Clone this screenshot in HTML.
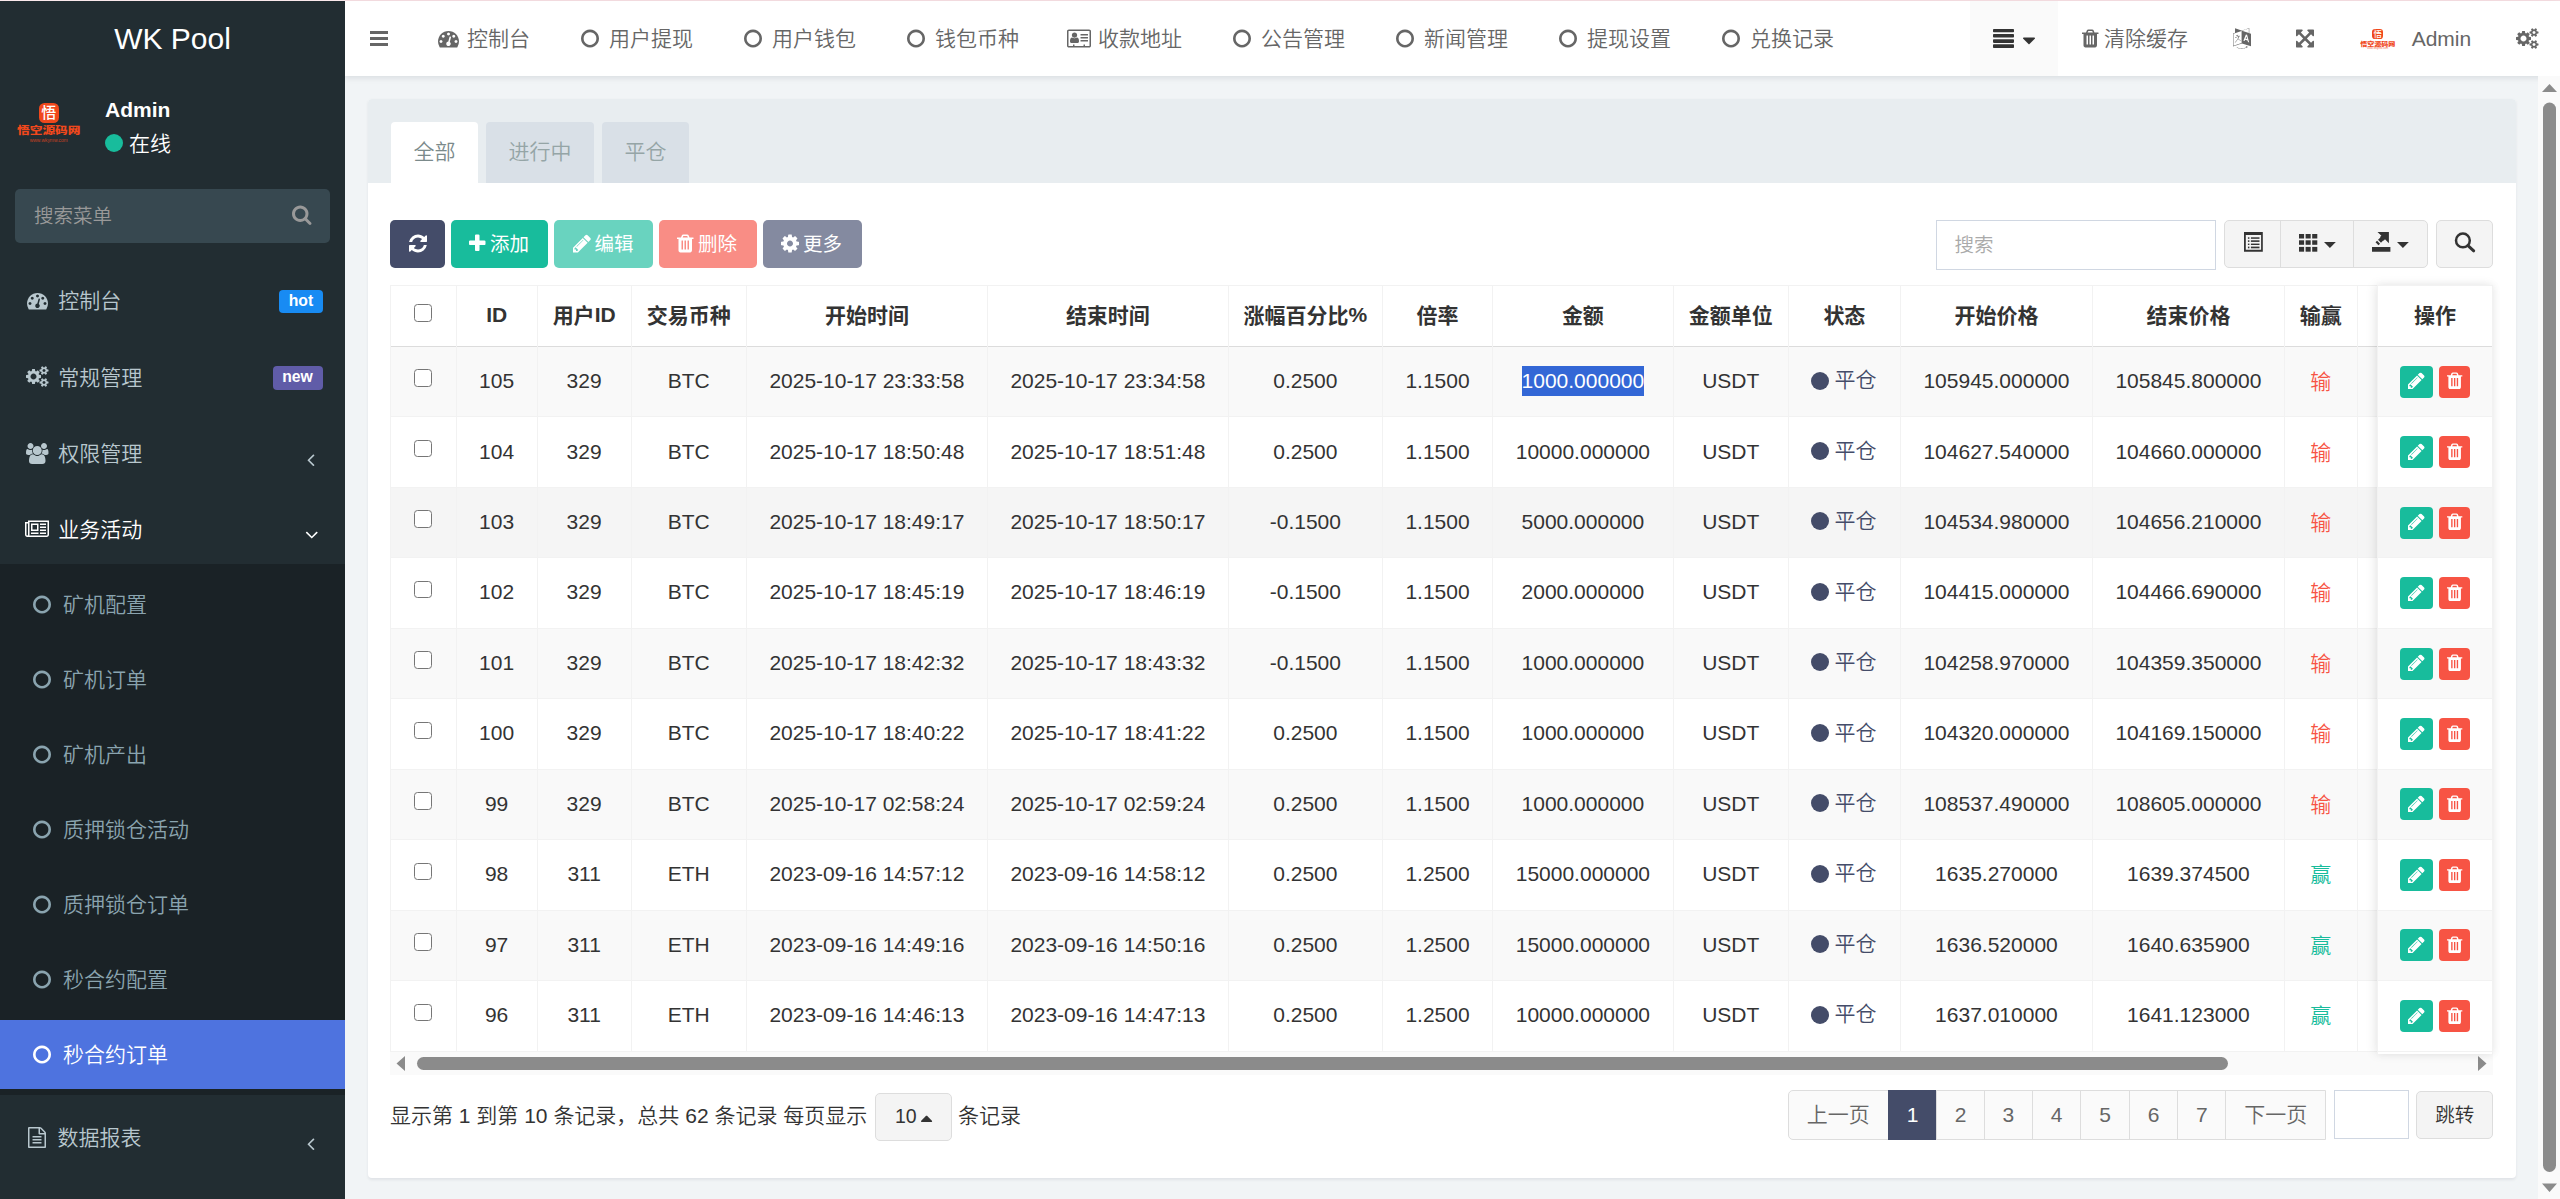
<!DOCTYPE html>
<html lang="zh-CN"><head><meta charset="utf-8"><title>WK Pool</title>
<style>
html,body{margin:0;padding:0}
body{width:2560px;height:1199px;overflow:hidden;position:relative;background:#f1f4f6;font-family:"Liberation Sans","Noto Sans CJK SC",sans-serif;font-size:21px;color:#333;font-weight:350}
.b{position:absolute;box-sizing:border-box}
.t{position:absolute;white-space:nowrap}
.i{position:absolute;overflow:visible}
</style></head><body>

<div class="b" style="left:0.00px;top:0.00px;width:2560.00px;height:1.00px;background:#f7dfe3;"></div>
<div class="b" style="left:0.00px;top:0.00px;width:345.00px;height:1.00px;background:#fbe9ec;"></div>
<div class="b" style="left:345.00px;top:1.00px;width:2215.00px;height:75.00px;background:#fff;box-shadow:0 1.5px 6px rgba(0,21,41,.10);"></div>
<div class="b" style="left:370.00px;top:30.75px;width:18.00px;height:3.00px;background:#666;"></div>
<div class="b" style="left:370.00px;top:36.75px;width:18.00px;height:3.00px;background:#666;"></div>
<div class="b" style="left:370.00px;top:42.75px;width:18.00px;height:3.00px;background:#666;"></div>
<svg class="i" style="left:438.00px;top:27.50px;width:21.00px;height:21px;" viewBox="0 -1536 1792 1792"><path fill="#666" transform="scale(1,-1)" d="M384 384q0 53 -37.5 90.5t-90.5 37.5t-90.5 -37.5t-37.5 -90.5t37.5 -90.5t90.5 -37.5t90.5 37.5t37.5 90.5zM576 832q0 53 -37.5 90.5t-90.5 37.5t-90.5 -37.5t-37.5 -90.5t37.5 -90.5t90.5 -37.5t90.5 37.5t37.5 90.5zM1004 351l101 382q6 26 -7.5 48.5t-38.5 29.5 t-48 -6.5t-30 -39.5l-101 -382q-60 -5 -107 -43.5t-63 -98.5q-20 -77 20 -146t117 -89t146 20t89 117q16 60 -6 117t-72 91zM1664 384q0 53 -37.5 90.5t-90.5 37.5t-90.5 -37.5t-37.5 -90.5t37.5 -90.5t90.5 -37.5t90.5 37.5t37.5 90.5zM1024 1024q0 53 -37.5 90.5 t-90.5 37.5t-90.5 -37.5t-37.5 -90.5t37.5 -90.5t90.5 -37.5t90.5 37.5t37.5 90.5zM1472 832q0 53 -37.5 90.5t-90.5 37.5t-90.5 -37.5t-37.5 -90.5t37.5 -90.5t90.5 -37.5t90.5 37.5t37.5 90.5zM1792 384q0 -261 -141 -483q-19 -29 -54 -29h-1402q-35 0 -54 29 q-141 221 -141 483q0 182 71 348t191 286t286 191t348 71t348 -71t286 -191t191 -286t71 -348z"/></svg>
<div class="t" style="top:18.50px;height:40px;line-height:40px;font-size:21px;color:#666;left:467.00px;">控制台</div>
<svg class="i" style="left:581.00px;top:27.50px;width:18.00px;height:21px;" viewBox="0 -1536 1536 1792"><path fill="#666" transform="scale(1,-1)" d="M768 1184q-148 0 -273 -73t-198 -198t-73 -273t73 -273t198 -198t273 -73t273 73t198 198t73 273t-73 273t-198 198t-273 73zM1536 640q0 -209 -103 -385.5t-279.5 -279.5t-385.5 -103t-385.5 103t-279.5 279.5t-103 385.5t103 385.5t279.5 279.5t385.5 103t385.5 -103 t279.5 -279.5t103 -385.5z"/></svg>
<div class="t" style="top:18.50px;height:40px;line-height:40px;font-size:21px;color:#666;left:609.00px;">用户提现</div>
<svg class="i" style="left:744.00px;top:27.50px;width:18.00px;height:21px;" viewBox="0 -1536 1536 1792"><path fill="#666" transform="scale(1,-1)" d="M768 1184q-148 0 -273 -73t-198 -198t-73 -273t73 -273t198 -198t273 -73t273 73t198 198t73 273t-73 273t-198 198t-273 73zM1536 640q0 -209 -103 -385.5t-279.5 -279.5t-385.5 -103t-385.5 103t-279.5 279.5t-103 385.5t103 385.5t279.5 279.5t385.5 103t385.5 -103 t279.5 -279.5t103 -385.5z"/></svg>
<div class="t" style="top:18.50px;height:40px;line-height:40px;font-size:21px;color:#666;left:772.00px;">用户钱包</div>
<svg class="i" style="left:907.00px;top:27.50px;width:18.00px;height:21px;" viewBox="0 -1536 1536 1792"><path fill="#666" transform="scale(1,-1)" d="M768 1184q-148 0 -273 -73t-198 -198t-73 -273t73 -273t198 -198t273 -73t273 73t198 198t73 273t-73 273t-198 198t-273 73zM1536 640q0 -209 -103 -385.5t-279.5 -279.5t-385.5 -103t-385.5 103t-279.5 279.5t-103 385.5t103 385.5t279.5 279.5t385.5 103t385.5 -103 t279.5 -279.5t103 -385.5z"/></svg>
<div class="t" style="top:18.50px;height:40px;line-height:40px;font-size:21px;color:#666;left:935.00px;">钱包币种</div>
<svg class="i" style="left:1067.00px;top:27.50px;width:24.00px;height:21px;" viewBox="0 -1536 2048 1792"><path fill="#666" transform="scale(1,-1)" d="M1024 405q0 -64 -37 -106.5t-91 -42.5h-512q-54 0 -91 42.5t-37 106.5t9 117.5t29.5 103t60.5 78t97 28.5q6 -4 30 -18t37.5 -21.5t35.5 -17.5t43 -14.5t42 -4.5t42 4.5t43 14.5t35.5 17.5t37.5 21.5t30 18q57 0 97 -28.5t60.5 -78t29.5 -103t9 -117.5zM867 925 q0 -94 -66.5 -160.5t-160.5 -66.5t-160.5 66.5t-66.5 160.5t66.5 160.5t160.5 66.5t160.5 -66.5t66.5 -160.5zM1792 480v-64q0 -14 -9 -23t-23 -9h-576q-14 0 -23 9t-9 23v64q0 14 9 23t23 9h576q14 0 23 -9t9 -23zM1792 732v-56q0 -15 -10.5 -25.5t-25.5 -10.5h-568 q-15 0 -25.5 10.5t-10.5 25.5v56q0 15 10.5 25.5t25.5 10.5h568q15 0 25.5 -10.5t10.5 -25.5zM1792 992v-64q0 -14 -9 -23t-23 -9h-576q-14 0 -23 9t-9 23v64q0 14 9 23t23 9h576q14 0 23 -9t9 -23zM1920 32v1216q0 13 -9.5 22.5t-22.5 9.5h-1728q-13 0 -22.5 -9.5 t-9.5 -22.5v-1216q0 -13 9.5 -22.5t22.5 -9.5h352v96q0 14 9 23t23 9h64q14 0 23 -9t9 -23v-96h768v96q0 14 9 23t23 9h64q14 0 23 -9t9 -23v-96h352q13 0 22.5 9.5t9.5 22.5zM2048 1248v-1216q0 -66 -47 -113t-113 -47h-1728q-66 0 -113 47t-47 113v1216q0 66 47 113 t113 47h1728q66 0 113 -47t47 -113z"/></svg>
<div class="t" style="top:18.50px;height:40px;line-height:40px;font-size:21px;color:#666;left:1098.00px;">收款地址</div>
<svg class="i" style="left:1233.00px;top:27.50px;width:18.00px;height:21px;" viewBox="0 -1536 1536 1792"><path fill="#666" transform="scale(1,-1)" d="M768 1184q-148 0 -273 -73t-198 -198t-73 -273t73 -273t198 -198t273 -73t273 73t198 198t73 273t-73 273t-198 198t-273 73zM1536 640q0 -209 -103 -385.5t-279.5 -279.5t-385.5 -103t-385.5 103t-279.5 279.5t-103 385.5t103 385.5t279.5 279.5t385.5 103t385.5 -103 t279.5 -279.5t103 -385.5z"/></svg>
<div class="t" style="top:18.50px;height:40px;line-height:40px;font-size:21px;color:#666;left:1261.00px;">公告管理</div>
<svg class="i" style="left:1396.00px;top:27.50px;width:18.00px;height:21px;" viewBox="0 -1536 1536 1792"><path fill="#666" transform="scale(1,-1)" d="M768 1184q-148 0 -273 -73t-198 -198t-73 -273t73 -273t198 -198t273 -73t273 73t198 198t73 273t-73 273t-198 198t-273 73zM1536 640q0 -209 -103 -385.5t-279.5 -279.5t-385.5 -103t-385.5 103t-279.5 279.5t-103 385.5t103 385.5t279.5 279.5t385.5 103t385.5 -103 t279.5 -279.5t103 -385.5z"/></svg>
<div class="t" style="top:18.50px;height:40px;line-height:40px;font-size:21px;color:#666;left:1424.00px;">新闻管理</div>
<svg class="i" style="left:1559.00px;top:27.50px;width:18.00px;height:21px;" viewBox="0 -1536 1536 1792"><path fill="#666" transform="scale(1,-1)" d="M768 1184q-148 0 -273 -73t-198 -198t-73 -273t73 -273t198 -198t273 -73t273 73t198 198t73 273t-73 273t-198 198t-273 73zM1536 640q0 -209 -103 -385.5t-279.5 -279.5t-385.5 -103t-385.5 103t-279.5 279.5t-103 385.5t103 385.5t279.5 279.5t385.5 103t385.5 -103 t279.5 -279.5t103 -385.5z"/></svg>
<div class="t" style="top:18.50px;height:40px;line-height:40px;font-size:21px;color:#666;left:1587.00px;">提现设置</div>
<svg class="i" style="left:1722.00px;top:27.50px;width:18.00px;height:21px;" viewBox="0 -1536 1536 1792"><path fill="#666" transform="scale(1,-1)" d="M768 1184q-148 0 -273 -73t-198 -198t-73 -273t73 -273t198 -198t273 -73t273 73t198 198t73 273t-73 273t-198 198t-273 73zM1536 640q0 -209 -103 -385.5t-279.5 -279.5t-385.5 -103t-385.5 103t-279.5 279.5t-103 385.5t103 385.5t279.5 279.5t385.5 103t385.5 -103 t279.5 -279.5t103 -385.5z"/></svg>
<div class="t" style="top:18.50px;height:40px;line-height:40px;font-size:21px;color:#666;left:1750.00px;">兑换记录</div>
<div class="b" style="left:1970.00px;top:1.00px;width:88.00px;height:75.00px;background:#fafafa;"></div>
<svg class="i" style="left:1993px;top:28px;width:21px;height:21px" viewBox="0 0 21 21"><g fill="#333"><rect x="0" y="0.9" width="21" height="3.3" rx=".8"/><rect x="0" y="6.1" width="21" height="3.5" rx=".8"/><rect x="0" y="11.2" width="21" height="3.7" rx=".8"/><rect x="0" y="16.3" width="21" height="3.7" rx=".8"/></g></svg>
<svg class="i" style="left:2023.00px;top:29.70px;width:12.00px;height:21px;" viewBox="0 -1536 1024 1792"><path fill="#333" transform="scale(1,-1)" d="M1024 832q0 -26 -19 -45l-448 -448q-19 -19 -45 -19t-45 19l-448 448q-19 19 -19 45t19 45t45 19h896q26 0 45 -19t19 -45z"/></svg>
<svg class="i" style="left:2082.00px;top:27.50px;width:16.50px;height:21px;" viewBox="0 -1536 1408 1792"><path fill="#666" transform="scale(1,-1)" d="M512 160v704q0 14 -9 23t-23 9h-64q-14 0 -23 -9t-9 -23v-704q0 -14 9 -23t23 -9h64q14 0 23 9t9 23zM768 160v704q0 14 -9 23t-23 9h-64q-14 0 -23 -9t-9 -23v-704q0 -14 9 -23t23 -9h64q14 0 23 9t9 23zM1024 160v704q0 14 -9 23t-23 9h-64q-14 0 -23 -9t-9 -23v-704 q0 -14 9 -23t23 -9h64q14 0 23 9t9 23zM480 1152h448l-48 117q-7 9 -17 11h-317q-10 -2 -17 -11zM1408 1120v-64q0 -14 -9 -23t-23 -9h-96v-948q0 -83 -47 -143.5t-113 -60.5h-832q-66 0 -113 58.5t-47 141.5v952h-96q-14 0 -23 9t-9 23v64q0 14 9 23t23 9h309l70 167 q15 37 54 63t79 26h320q40 0 79 -26t54 -63l70 -167h309q14 0 23 -9t9 -23z"/></svg>
<div class="t" style="top:18.50px;height:40px;line-height:40px;font-size:21px;color:#666;left:2104.00px;">清除缓存</div>
<svg class="i" style="left:2233.00px;top:27.50px;width:18.00px;height:21px;" viewBox="0 -1536 1536 1792"><path fill="#666" transform="scale(1,-1)" d="M654 458q-1 -3 -12.5 0.5t-31.5 11.5l-20 9q-44 20 -87 49q-7 5 -41 31.5t-38 28.5q-67 -103 -134 -181q-81 -95 -105 -110q-4 -2 -19.5 -4t-18.5 0q6 4 82 92q21 24 85.5 115t78.5 118q17 30 51 98.5t36 77.5q-8 1 -110 -33q-8 -2 -27.5 -7.5t-34.5 -9.5t-17 -5 q-2 -2 -2 -10.5t-1 -9.5q-5 -10 -31 -15q-23 -7 -47 0q-18 4 -28 21q-4 6 -5 23q6 2 24.5 5t29.5 6q58 16 105 32q100 35 102 35q10 2 43 19.5t44 21.5q9 3 21.5 8t14.5 5.5t6 -0.5q2 -12 -1 -33q0 -2 -12.5 -27t-26.5 -53.5t-17 -33.5q-25 -50 -77 -131l64 -28 q12 -6 74.5 -32t67.5 -28q4 -1 10.5 -25.5t4.5 -30.5zM449 944q3 -15 -4 -28q-12 -23 -50 -38q-30 -12 -60 -12q-26 3 -49 26q-14 15 -18 41l1 3q3 -3 19.5 -5t26.5 0t58 16q36 12 55 14q17 0 21 -17zM1147 815l63 -227l-139 42zM39 15l694 232v1032l-694 -233v-1031z M1280 332l102 -31l-181 657l-100 31l-216 -536l102 -31l45 110l211 -65zM777 1294l573 -184v380zM1088 -29l158 -13l-54 -160l-40 66q-130 -83 -276 -108q-58 -12 -91 -12h-84q-79 0 -199.5 39t-183.5 85q-8 7 -8 16q0 8 5 13.5t13 5.5q4 0 18 -7.5t30.5 -16.5t20.5 -11 q73 -37 159.5 -61.5t157.5 -24.5q95 0 167 14.5t157 50.5q15 7 30.5 15.5t34 19t28.5 16.5zM1536 1050v-1079l-774 246q-14 -6 -375 -127.5t-368 -121.5q-13 0 -18 13q0 1 -1 3v1078q3 9 4 10q5 6 20 11q107 36 149 50v384l558 -198q2 0 160.5 55t316 108.5t161.5 53.5 q20 0 20 -21v-418z"/></svg>
<svg class="i" style="left:2296.00px;top:27.50px;width:18.00px;height:21px;" viewBox="0 -1536 1536 1792"><path fill="#666" transform="scale(1,-1)" d="M1283 995l-355 -355l355 -355l144 144q29 31 70 14q39 -17 39 -59v-448q0 -26 -19 -45t-45 -19h-448q-42 0 -59 40q-17 39 14 69l144 144l-355 355l-355 -355l144 -144q31 -30 14 -69q-17 -40 -59 -40h-448q-26 0 -45 19t-19 45v448q0 42 40 59q39 17 69 -14l144 -144 l355 355l-355 355l-144 -144q-19 -19 -45 -19q-12 0 -24 5q-40 17 -40 59v448q0 26 19 45t45 19h448q42 0 59 -40q17 -39 -14 -69l-144 -144l355 -355l355 355l-144 144q-31 30 -14 69q17 40 59 40h448q26 0 45 -19t19 -45v-448q0 -42 -39 -59q-13 -5 -25 -5q-26 0 -45 19z "/></svg>
<div class="b" style="left:2372.06px;top:28.67px;width:11.39px;height:10.83px;background:#f0481c;border-radius:3.1px;"></div><div class="t" style="left:2372.06px;top:28.67px;width:11.39px;height:10.83px;line-height:10.83px;font-size:8.33px;color:#fff;text-align:center;font-weight:500">悟</div><div class="t" style="left:2359.00px;top:40.33px;width:37.50px;height:7.78px;line-height:7.78px;font-size:7.06px;color:#f0481c;text-align:center;font-weight:900;transform:scaleY(.78)">悟空源码网</div><div class="t" style="left:2359.00px;top:48.00px;width:37.50px;height:2.78px;line-height:2.78px;font-size:2.72px;color:#f0481c;opacity:.75;text-align:center;">www.wkymw.com</div>
<div class="t" style="top:18.50px;height:40px;line-height:40px;font-size:21px;color:#666;left:2411.70px;">Admin</div>
<svg class="i" style="left:2516.00px;top:27.50px;width:22.50px;height:21px;" viewBox="0 -1536 1920 1792"><path fill="#666" transform="scale(1,-1)" d="M896 640q0 106 -75 181t-181 75t-181 -75t-75 -181t75 -181t181 -75t181 75t75 181zM1664 128q0 52 -38 90t-90 38t-90 -38t-38 -90q0 -53 37.5 -90.5t90.5 -37.5t90.5 37.5t37.5 90.5zM1664 1152q0 52 -38 90t-90 38t-90 -38t-38 -90q0 -53 37.5 -90.5t90.5 -37.5 t90.5 37.5t37.5 90.5zM1280 731v-185q0 -10 -7 -19.5t-16 -10.5l-155 -24q-11 -35 -32 -76q34 -48 90 -115q7 -11 7 -20q0 -12 -7 -19q-23 -30 -82.5 -89.5t-78.5 -59.5q-11 0 -21 7l-115 90q-37 -19 -77 -31q-11 -108 -23 -155q-7 -24 -30 -24h-186q-11 0 -20 7.5t-10 17.5 l-23 153q-34 10 -75 31l-118 -89q-7 -7 -20 -7q-11 0 -21 8q-144 133 -144 160q0 9 7 19q10 14 41 53t47 61q-23 44 -35 82l-152 24q-10 1 -17 9.5t-7 19.5v185q0 10 7 19.5t16 10.5l155 24q11 35 32 76q-34 48 -90 115q-7 11 -7 20q0 12 7 20q22 30 82 89t79 59q11 0 21 -7 l115 -90q34 18 77 32q11 108 23 154q7 24 30 24h186q11 0 20 -7.5t10 -17.5l23 -153q34 -10 75 -31l118 89q8 7 20 7q11 0 21 -8q144 -133 144 -160q0 -8 -7 -19q-12 -16 -42 -54t-45 -60q23 -48 34 -82l152 -23q10 -2 17 -10.5t7 -19.5zM1920 198v-140q0 -16 -149 -31 q-12 -27 -30 -52q51 -113 51 -138q0 -4 -4 -7q-122 -71 -124 -71q-8 0 -46 47t-52 68q-20 -2 -30 -2t-30 2q-14 -21 -52 -68t-46 -47q-2 0 -124 71q-4 3 -4 7q0 25 51 138q-18 25 -30 52q-149 15 -149 31v140q0 16 149 31q13 29 30 52q-51 113 -51 138q0 4 4 7q4 2 35 20 t59 34t30 16q8 0 46 -46.5t52 -67.5q20 2 30 2t30 -2q51 71 92 112l6 2q4 0 124 -70q4 -3 4 -7q0 -25 -51 -138q17 -23 30 -52q149 -15 149 -31zM1920 1222v-140q0 -16 -149 -31q-12 -27 -30 -52q51 -113 51 -138q0 -4 -4 -7q-122 -71 -124 -71q-8 0 -46 47t-52 68 q-20 -2 -30 -2t-30 2q-14 -21 -52 -68t-46 -47q-2 0 -124 71q-4 3 -4 7q0 25 51 138q-18 25 -30 52q-149 15 -149 31v140q0 16 149 31q13 29 30 52q-51 113 -51 138q0 4 4 7q4 2 35 20t59 34t30 16q8 0 46 -46.5t52 -67.5q20 2 30 2t30 -2q51 71 92 112l6 2q4 0 124 -70 q4 -3 4 -7q0 -25 -51 -138q17 -23 30 -52q149 -15 149 -31z"/></svg>
<div class="b" style="left:0.00px;top:1.00px;width:345.00px;height:1198.00px;background:#222d32;"></div>
<div class="t" style="top:18.50px;height:40px;line-height:40px;font-size:30px;color:#fff;left:-327.50px;width:1000px;text-align:center;">WK Pool</div>
<div class="b" style="left:38.50px;top:103.00px;width:20.50px;height:19.50px;background:#f0481c;border-radius:5.5px;"></div><div class="t" style="left:38.50px;top:103.00px;width:20.50px;height:19.50px;line-height:19.50px;font-size:15.00px;color:#fff;text-align:center;font-weight:500">悟</div><div class="t" style="left:15.00px;top:124.00px;width:67.50px;height:14.00px;line-height:14.00px;font-size:12.70px;color:#f0481c;text-align:center;font-weight:900;transform:scaleY(.78)">悟空源码网</div><div class="t" style="left:15.00px;top:137.80px;width:67.50px;height:5.00px;line-height:5.00px;font-size:4.90px;color:#f0481c;opacity:.75;text-align:center;">www.wkymw.com</div>
<div class="t" style="top:90.00px;height:40px;line-height:40px;font-size:21px;color:#fff;font-weight:700;left:105.00px;">Admin</div>
<div class="b" style="left:105.00px;top:134.40px;width:18.00px;height:18.00px;background:#18bc9c;border-radius:50%;"></div>
<div class="t" style="top:123.50px;height:40px;line-height:40px;font-size:21px;color:#fff;left:129.00px;">在线</div>
<div class="b" style="left:15.00px;top:189.00px;width:315.00px;height:54.00px;background:#374850;border-radius:5px;"></div>
<div class="t" style="top:196.00px;height:40px;line-height:40px;font-size:19.5px;color:#999;left:34.00px;">搜索菜单</div>
<svg class="i" style="left:291.50px;top:204.00px;width:19.50px;height:21px;" viewBox="0 -1536 1664 1792"><path fill="#999" transform="scale(1,-1)" d="M1152 704q0 185 -131.5 316.5t-316.5 131.5t-316.5 -131.5t-131.5 -316.5t131.5 -316.5t316.5 -131.5t316.5 131.5t131.5 316.5zM1664 -128q0 -52 -38 -90t-90 -38q-54 0 -90 38l-343 342q-179 -124 -399 -124q-143 0 -273.5 55.5t-225 150t-150 225t-55.5 273.5 t55.5 273.5t150 225t225 150t273.5 55.5t273.5 -55.5t225 -150t150 -225t55.5 -273.5q0 -220 -124 -399l343 -343q37 -37 37 -90z"/></svg>
<svg class="i" style="left:26.50px;top:290.00px;width:21.00px;height:21px;" viewBox="0 -1536 1792 1792"><path fill="#b8c7ce" transform="scale(1,-1)" d="M384 384q0 53 -37.5 90.5t-90.5 37.5t-90.5 -37.5t-37.5 -90.5t37.5 -90.5t90.5 -37.5t90.5 37.5t37.5 90.5zM576 832q0 53 -37.5 90.5t-90.5 37.5t-90.5 -37.5t-37.5 -90.5t37.5 -90.5t90.5 -37.5t90.5 37.5t37.5 90.5zM1004 351l101 382q6 26 -7.5 48.5t-38.5 29.5 t-48 -6.5t-30 -39.5l-101 -382q-60 -5 -107 -43.5t-63 -98.5q-20 -77 20 -146t117 -89t146 20t89 117q16 60 -6 117t-72 91zM1664 384q0 53 -37.5 90.5t-90.5 37.5t-90.5 -37.5t-37.5 -90.5t37.5 -90.5t90.5 -37.5t90.5 37.5t37.5 90.5zM1024 1024q0 53 -37.5 90.5 t-90.5 37.5t-90.5 -37.5t-37.5 -90.5t37.5 -90.5t90.5 -37.5t90.5 37.5t37.5 90.5zM1472 832q0 53 -37.5 90.5t-90.5 37.5t-90.5 -37.5t-37.5 -90.5t37.5 -90.5t90.5 -37.5t90.5 37.5t37.5 90.5zM1792 384q0 -261 -141 -483q-19 -29 -54 -29h-1402q-35 0 -54 29 q-141 221 -141 483q0 182 71 348t191 286t286 191t348 71t348 -71t286 -191t191 -286t71 -348z"/></svg>
<div class="t" style="top:280.50px;height:40px;line-height:40px;font-size:21px;color:#b8c7ce;left:58.30px;">控制台</div>
<div class="b" style="left:279.00px;top:290.00px;width:44.00px;height:23.00px;background:#188bf3;border-radius:4px;"></div>
<div class="t" style="top:280.70px;height:40px;line-height:40px;font-size:15.75px;color:#fff;font-weight:700;left:-199.00px;width:1000px;text-align:center;">hot</div>
<svg class="i" style="left:25.75px;top:366.00px;width:22.50px;height:21px;" viewBox="0 -1536 1920 1792"><path fill="#b8c7ce" transform="scale(1,-1)" d="M896 640q0 106 -75 181t-181 75t-181 -75t-75 -181t75 -181t181 -75t181 75t75 181zM1664 128q0 52 -38 90t-90 38t-90 -38t-38 -90q0 -53 37.5 -90.5t90.5 -37.5t90.5 37.5t37.5 90.5zM1664 1152q0 52 -38 90t-90 38t-90 -38t-38 -90q0 -53 37.5 -90.5t90.5 -37.5 t90.5 37.5t37.5 90.5zM1280 731v-185q0 -10 -7 -19.5t-16 -10.5l-155 -24q-11 -35 -32 -76q34 -48 90 -115q7 -11 7 -20q0 -12 -7 -19q-23 -30 -82.5 -89.5t-78.5 -59.5q-11 0 -21 7l-115 90q-37 -19 -77 -31q-11 -108 -23 -155q-7 -24 -30 -24h-186q-11 0 -20 7.5t-10 17.5 l-23 153q-34 10 -75 31l-118 -89q-7 -7 -20 -7q-11 0 -21 8q-144 133 -144 160q0 9 7 19q10 14 41 53t47 61q-23 44 -35 82l-152 24q-10 1 -17 9.5t-7 19.5v185q0 10 7 19.5t16 10.5l155 24q11 35 32 76q-34 48 -90 115q-7 11 -7 20q0 12 7 20q22 30 82 89t79 59q11 0 21 -7 l115 -90q34 18 77 32q11 108 23 154q7 24 30 24h186q11 0 20 -7.5t10 -17.5l23 -153q34 -10 75 -31l118 89q8 7 20 7q11 0 21 -8q144 -133 144 -160q0 -8 -7 -19q-12 -16 -42 -54t-45 -60q23 -48 34 -82l152 -23q10 -2 17 -10.5t7 -19.5zM1920 198v-140q0 -16 -149 -31 q-12 -27 -30 -52q51 -113 51 -138q0 -4 -4 -7q-122 -71 -124 -71q-8 0 -46 47t-52 68q-20 -2 -30 -2t-30 2q-14 -21 -52 -68t-46 -47q-2 0 -124 71q-4 3 -4 7q0 25 51 138q-18 25 -30 52q-149 15 -149 31v140q0 16 149 31q13 29 30 52q-51 113 -51 138q0 4 4 7q4 2 35 20 t59 34t30 16q8 0 46 -46.5t52 -67.5q20 2 30 2t30 -2q51 71 92 112l6 2q4 0 124 -70q4 -3 4 -7q0 -25 -51 -138q17 -23 30 -52q149 -15 149 -31zM1920 1222v-140q0 -16 -149 -31q-12 -27 -30 -52q51 -113 51 -138q0 -4 -4 -7q-122 -71 -124 -71q-8 0 -46 47t-52 68 q-20 -2 -30 -2t-30 2q-14 -21 -52 -68t-46 -47q-2 0 -124 71q-4 3 -4 7q0 25 51 138q-18 25 -30 52q-149 15 -149 31v140q0 16 149 31q13 29 30 52q-51 113 -51 138q0 4 4 7q4 2 35 20t59 34t30 16q8 0 46 -46.5t52 -67.5q20 2 30 2t30 -2q51 71 92 112l6 2q4 0 124 -70 q4 -3 4 -7q0 -25 -51 -138q17 -23 30 -52q149 -15 149 -31z"/></svg>
<div class="t" style="top:357.50px;height:40px;line-height:40px;font-size:21px;color:#b8c7ce;left:58.30px;">常规管理</div>
<div class="b" style="left:272.50px;top:366.00px;width:50.00px;height:23.50px;background:#605ca8;border-radius:4px;"></div>
<div class="t" style="top:357.00px;height:40px;line-height:40px;font-size:15.75px;color:#fff;font-weight:700;left:-202.50px;width:1000px;text-align:center;">new</div>
<svg class="i" style="left:25.75px;top:442.50px;width:22.50px;height:21px;" viewBox="0 -1536 1920 1792"><path fill="#b8c7ce" transform="scale(1,-1)" d="M593 640q-162 -5 -265 -128h-134q-82 0 -138 40.5t-56 118.5q0 353 124 353q6 0 43.5 -21t97.5 -42.5t119 -21.5q67 0 133 23q-5 -37 -5 -66q0 -139 81 -256zM1664 3q0 -120 -73 -189.5t-194 -69.5h-874q-121 0 -194 69.5t-73 189.5q0 53 3.5 103.5t14 109t26.5 108.5 t43 97.5t62 81t85.5 53.5t111.5 20q10 0 43 -21.5t73 -48t107 -48t135 -21.5t135 21.5t107 48t73 48t43 21.5q61 0 111.5 -20t85.5 -53.5t62 -81t43 -97.5t26.5 -108.5t14 -109t3.5 -103.5zM640 1280q0 -106 -75 -181t-181 -75t-181 75t-75 181t75 181t181 75t181 -75 t75 -181zM1344 896q0 -159 -112.5 -271.5t-271.5 -112.5t-271.5 112.5t-112.5 271.5t112.5 271.5t271.5 112.5t271.5 -112.5t112.5 -271.5zM1920 671q0 -78 -56 -118.5t-138 -40.5h-134q-103 123 -265 128q81 117 81 256q0 29 -5 66q66 -23 133 -23q59 0 119 21.5t97.5 42.5 t43.5 21q124 0 124 -353zM1792 1280q0 -106 -75 -181t-181 -75t-181 75t-75 181t75 181t181 75t181 -75t75 -181z"/></svg>
<div class="t" style="top:434.00px;height:40px;line-height:40px;font-size:21px;color:#b8c7ce;left:58.30px;">权限管理</div>
<svg class="i" style="left:307.30px;top:448.50px;width:7.50px;height:21px;" viewBox="0 -1536 640 1792"><path fill="#b8c7ce" transform="scale(1,-1)" d="M627 992q0 -13 -10 -23l-393 -393l393 -393q10 -10 10 -23t-10 -23l-50 -50q-10 -10 -23 -10t-23 10l-466 466q-10 10 -10 23t10 23l466 466q10 10 23 10t23 -10l50 -50q10 -10 10 -23z"/></svg>
<svg class="i" style="left:25.00px;top:518.50px;width:24.00px;height:21px;" viewBox="0 -1536 2048 1792"><path fill="#fff" transform="scale(1,-1)" d="M1024 1024h-384v-384h384v384zM1152 384v-128h-640v128h640zM1152 1152v-640h-640v640h640zM1792 384v-128h-512v128h512zM1792 640v-128h-512v128h512zM1792 896v-128h-512v128h512zM1792 1152v-128h-512v128h512zM256 192v960h-128v-960q0 -26 19 -45t45 -19t45 19 t19 45zM1920 192v1088h-1536v-1088q0 -33 -11 -64h1483q26 0 45 19t19 45zM2048 1408v-1216q0 -80 -56 -136t-136 -56h-1664q-80 0 -136 56t-56 136v1088h256v128h1792z"/></svg>
<div class="t" style="top:510.00px;height:40px;line-height:40px;font-size:21px;color:#fff;left:58.30px;">业务活动</div>
<svg class="i" style="left:305.00px;top:524.00px;width:13.50px;height:21px;" viewBox="0 -1536 1152 1792"><path fill="#fff" transform="scale(1,-1)" d="M1075 800q0 -13 -10 -23l-466 -466q-10 -10 -23 -10t-23 10l-466 466q-10 10 -10 23t10 23l50 50q10 10 23 10t23 -10l393 -393l393 393q10 10 23 10t23 -10l50 -50q10 -10 10 -23z"/></svg>
<div class="b" style="left:0.00px;top:564.00px;width:345.00px;height:531.00px;background:#1a2226;"></div>
<svg class="i" style="left:33.00px;top:593.50px;width:18.00px;height:21px;" viewBox="0 -1536 1536 1792"><path fill="#8aa4af" transform="scale(1,-1)" d="M768 1184q-148 0 -273 -73t-198 -198t-73 -273t73 -273t198 -198t273 -73t273 73t198 198t73 273t-73 273t-198 198t-273 73zM1536 640q0 -209 -103 -385.5t-279.5 -279.5t-385.5 -103t-385.5 103t-279.5 279.5t-103 385.5t103 385.5t279.5 279.5t385.5 103t385.5 -103 t279.5 -279.5t103 -385.5z"/></svg>
<div class="t" style="top:584.80px;height:40px;line-height:40px;font-size:21px;color:#8aa4af;left:63.00px;">矿机配置</div>
<svg class="i" style="left:33.00px;top:668.50px;width:18.00px;height:21px;" viewBox="0 -1536 1536 1792"><path fill="#8aa4af" transform="scale(1,-1)" d="M768 1184q-148 0 -273 -73t-198 -198t-73 -273t73 -273t198 -198t273 -73t273 73t198 198t73 273t-73 273t-198 198t-273 73zM1536 640q0 -209 -103 -385.5t-279.5 -279.5t-385.5 -103t-385.5 103t-279.5 279.5t-103 385.5t103 385.5t279.5 279.5t385.5 103t385.5 -103 t279.5 -279.5t103 -385.5z"/></svg>
<div class="t" style="top:659.80px;height:40px;line-height:40px;font-size:21px;color:#8aa4af;left:63.00px;">矿机订单</div>
<svg class="i" style="left:33.00px;top:743.50px;width:18.00px;height:21px;" viewBox="0 -1536 1536 1792"><path fill="#8aa4af" transform="scale(1,-1)" d="M768 1184q-148 0 -273 -73t-198 -198t-73 -273t73 -273t198 -198t273 -73t273 73t198 198t73 273t-73 273t-198 198t-273 73zM1536 640q0 -209 -103 -385.5t-279.5 -279.5t-385.5 -103t-385.5 103t-279.5 279.5t-103 385.5t103 385.5t279.5 279.5t385.5 103t385.5 -103 t279.5 -279.5t103 -385.5z"/></svg>
<div class="t" style="top:734.80px;height:40px;line-height:40px;font-size:21px;color:#8aa4af;left:63.00px;">矿机产出</div>
<svg class="i" style="left:33.00px;top:818.50px;width:18.00px;height:21px;" viewBox="0 -1536 1536 1792"><path fill="#8aa4af" transform="scale(1,-1)" d="M768 1184q-148 0 -273 -73t-198 -198t-73 -273t73 -273t198 -198t273 -73t273 73t198 198t73 273t-73 273t-198 198t-273 73zM1536 640q0 -209 -103 -385.5t-279.5 -279.5t-385.5 -103t-385.5 103t-279.5 279.5t-103 385.5t103 385.5t279.5 279.5t385.5 103t385.5 -103 t279.5 -279.5t103 -385.5z"/></svg>
<div class="t" style="top:809.80px;height:40px;line-height:40px;font-size:21px;color:#8aa4af;left:63.00px;">质押锁仓活动</div>
<svg class="i" style="left:33.00px;top:893.50px;width:18.00px;height:21px;" viewBox="0 -1536 1536 1792"><path fill="#8aa4af" transform="scale(1,-1)" d="M768 1184q-148 0 -273 -73t-198 -198t-73 -273t73 -273t198 -198t273 -73t273 73t198 198t73 273t-73 273t-198 198t-273 73zM1536 640q0 -209 -103 -385.5t-279.5 -279.5t-385.5 -103t-385.5 103t-279.5 279.5t-103 385.5t103 385.5t279.5 279.5t385.5 103t385.5 -103 t279.5 -279.5t103 -385.5z"/></svg>
<div class="t" style="top:884.80px;height:40px;line-height:40px;font-size:21px;color:#8aa4af;left:63.00px;">质押锁仓订单</div>
<svg class="i" style="left:33.00px;top:968.50px;width:18.00px;height:21px;" viewBox="0 -1536 1536 1792"><path fill="#8aa4af" transform="scale(1,-1)" d="M768 1184q-148 0 -273 -73t-198 -198t-73 -273t73 -273t198 -198t273 -73t273 73t198 198t73 273t-73 273t-198 198t-273 73zM1536 640q0 -209 -103 -385.5t-279.5 -279.5t-385.5 -103t-385.5 103t-279.5 279.5t-103 385.5t103 385.5t279.5 279.5t385.5 103t385.5 -103 t279.5 -279.5t103 -385.5z"/></svg>
<div class="t" style="top:959.80px;height:40px;line-height:40px;font-size:21px;color:#8aa4af;left:63.00px;">秒合约配置</div>
<div class="b" style="left:0.00px;top:1020.00px;width:345.00px;height:69.00px;background:#4e73df;"></div>
<svg class="i" style="left:33.00px;top:1043.50px;width:18.00px;height:21px;" viewBox="0 -1536 1536 1792"><path fill="#fff" transform="scale(1,-1)" d="M768 1184q-148 0 -273 -73t-198 -198t-73 -273t73 -273t198 -198t273 -73t273 73t198 198t73 273t-73 273t-198 198t-273 73zM1536 640q0 -209 -103 -385.5t-279.5 -279.5t-385.5 -103t-385.5 103t-279.5 279.5t-103 385.5t103 385.5t279.5 279.5t385.5 103t385.5 -103 t279.5 -279.5t103 -385.5z"/></svg>
<div class="t" style="top:1034.80px;height:40px;line-height:40px;font-size:21px;color:#fff;left:63.00px;">秒合约订单</div>
<svg class="i" style="left:28.40px;top:1127.00px;width:18.00px;height:21px;" viewBox="0 -1536 1536 1792"><path fill="#b8c7ce" transform="scale(1,-1)" d="M1468 1156q28 -28 48 -76t20 -88v-1152q0 -40 -28 -68t-68 -28h-1344q-40 0 -68 28t-28 68v1600q0 40 28 68t68 28h896q40 0 88 -20t76 -48zM1024 1400v-376h376q-10 29 -22 41l-313 313q-12 12 -41 22zM1408 -128v1024h-416q-40 0 -68 28t-28 68v416h-768v-1536h1280z M384 736q0 14 9 23t23 9h704q14 0 23 -9t9 -23v-64q0 -14 -9 -23t-23 -9h-704q-14 0 -23 9t-9 23v64zM1120 512q14 0 23 -9t9 -23v-64q0 -14 -9 -23t-23 -9h-704q-14 0 -23 9t-9 23v64q0 14 9 23t23 9h704zM1120 256q14 0 23 -9t9 -23v-64q0 -14 -9 -23t-23 -9h-704 q-14 0 -23 9t-9 23v64q0 14 9 23t23 9h704z"/></svg>
<div class="t" style="top:1117.50px;height:40px;line-height:40px;font-size:21px;color:#b8c7ce;left:57.50px;">数据报表</div>
<svg class="i" style="left:307.20px;top:1132.50px;width:7.50px;height:21px;" viewBox="0 -1536 640 1792"><path fill="#b8c7ce" transform="scale(1,-1)" d="M627 992q0 -13 -10 -23l-393 -393l393 -393q10 -10 10 -23t-10 -23l-50 -50q-10 -10 -23 -10t-23 10l-466 466q-10 10 -10 23t10 23l466 466q10 10 23 10t23 -10l50 -50q10 -10 10 -23z"/></svg>
<div class="b" style="left:2538.00px;top:76.00px;width:22.00px;height:1123.00px;background:#fafafa;"></div>
<svg class="i" style="left:2538px;top:76px;width:22px;height:1123px" viewBox="0 0 22 1123"><path fill="#8b8b8b" d="M4 16 L11.5 8 L19 16Z M4 1107.5 L19 1107.5 L11.5 1116Z"/><rect x="5" y="26.5" width="13" height="1069.5" rx="6.5" fill="#8b8b8b"/></svg>
<div class="b" style="left:368.00px;top:99.00px;width:2148.00px;height:1079.00px;background:#fff;border-radius:4px;box-shadow:0 1.5px 3px rgba(0,21,41,.07);"></div>
<div class="b" style="left:368.00px;top:99.00px;width:2148.00px;height:84.00px;background:#e8edf0;border-radius:4px 4px 0 0;"></div>
<div class="b" style="left:391.00px;top:122.00px;width:87.00px;height:61.00px;background:#fff;border-radius:4px 4px 0 0;"></div>
<div class="t" style="top:132.00px;height:40px;line-height:40px;font-size:21px;color:#7b8a8b;left:-65.50px;width:1000px;text-align:center;">全部</div>
<div class="b" style="left:486.00px;top:122.00px;width:108.00px;height:61.00px;background:#d9e0e7;border-radius:4px 4px 0 0;"></div>
<div class="t" style="top:132.00px;height:40px;line-height:40px;font-size:21px;color:#95a5a6;left:40.00px;width:1000px;text-align:center;">进行中</div>
<div class="b" style="left:602.00px;top:122.00px;width:87.00px;height:61.00px;background:#d9e0e7;border-radius:4px 4px 0 0;"></div>
<div class="t" style="top:132.00px;height:40px;line-height:40px;font-size:21px;color:#95a5a6;left:145.50px;width:1000px;text-align:center;">平仓</div>
<div class="b" style="left:390.00px;top:220.00px;width:55.00px;height:48.00px;background:#444c69;border-radius:5px;"></div>
<svg class="i" style="left:408.80px;top:232.50px;width:18.00px;height:21px;" viewBox="0 -1536 1536 1792"><path fill="#fff" transform="scale(1,-1)" d="M1511 480q0 -5 -1 -7q-64 -268 -268 -434.5t-478 -166.5q-146 0 -282.5 55t-243.5 157l-129 -129q-19 -19 -45 -19t-45 19t-19 45v448q0 26 19 45t45 19h448q26 0 45 -19t19 -45t-19 -45l-137 -137q71 -66 161 -102t187 -36q134 0 250 65t186 179q11 17 53 117 q8 23 30 23h192q13 0 22.5 -9.5t9.5 -22.5zM1536 1280v-448q0 -26 -19 -45t-45 -19h-448q-26 0 -45 19t-19 45t19 45l138 138q-148 137 -349 137q-134 0 -250 -65t-186 -179q-11 -17 -53 -117q-8 -23 -30 -23h-199q-13 0 -22.5 9.5t-9.5 22.5v7q65 268 270 434.5t480 166.5 q146 0 284 -55.5t245 -156.5l130 129q19 19 45 19t45 -19t19 -45z"/></svg>
<div class="b" style="left:451.00px;top:220.00px;width:97.00px;height:48.00px;background:#18bc9c;border-radius:5px;"></div>
<svg class="i" style="left:469.10px;top:232.50px;width:16.50px;height:21px;" viewBox="0 -1536 1408 1792"><path fill="#fff" transform="scale(1,-1)" d="M1408 800v-192q0 -40 -28 -68t-68 -28h-416v-416q0 -40 -28 -68t-68 -28h-192q-40 0 -68 28t-28 68v416h-416q-40 0 -68 28t-28 68v192q0 40 28 68t68 28h416v416q0 40 28 68t68 28h192q40 0 68 -28t28 -68v-416h416q40 0 68 -28t28 -68z"/></svg>
<div class="t" style="top:224.00px;height:40px;line-height:40px;font-size:19.5px;color:#fff;font-weight:400;left:490.00px;">添加</div>
<div class="b" style="left:554.00px;top:220.00px;width:99.00px;height:48.00px;background:#69d3bf;border-radius:5px;"></div>
<svg class="i" style="left:572.80px;top:232.50px;width:18.00px;height:21px;" viewBox="0 -1536 1536 1792"><path fill="#fff" transform="scale(1,-1)" d="M363 0l91 91l-235 235l-91 -91v-107h128v-128h107zM886 928q0 22 -22 22q-10 0 -17 -7l-542 -542q-7 -7 -7 -17q0 -22 22 -22q10 0 17 7l542 542q7 7 7 17zM832 1120l416 -416l-832 -832h-416v416zM1515 1024q0 -53 -37 -90l-166 -166l-416 416l166 165q36 38 90 38 q53 0 91 -38l235 -234q37 -39 37 -91z"/></svg>
<div class="t" style="top:224.00px;height:40px;line-height:40px;font-size:19.5px;color:#fff;font-weight:400;left:594.50px;">编辑</div>
<div class="b" style="left:659.00px;top:220.00px;width:98.00px;height:48.00px;background:#f98d85;border-radius:5px;"></div>
<svg class="i" style="left:677.40px;top:232.50px;width:16.50px;height:21px;" viewBox="0 -1536 1408 1792"><path fill="#fff" transform="scale(1,-1)" d="M512 160v704q0 14 -9 23t-23 9h-64q-14 0 -23 -9t-9 -23v-704q0 -14 9 -23t23 -9h64q14 0 23 9t9 23zM768 160v704q0 14 -9 23t-23 9h-64q-14 0 -23 -9t-9 -23v-704q0 -14 9 -23t23 -9h64q14 0 23 9t9 23zM1024 160v704q0 14 -9 23t-23 9h-64q-14 0 -23 -9t-9 -23v-704 q0 -14 9 -23t23 -9h64q14 0 23 9t9 23zM480 1152h448l-48 117q-7 9 -17 11h-317q-10 -2 -17 -11zM1408 1120v-64q0 -14 -9 -23t-23 -9h-96v-948q0 -83 -47 -143.5t-113 -60.5h-832q-66 0 -113 58.5t-47 141.5v952h-96q-14 0 -23 9t-9 23v64q0 14 9 23t23 9h309l70 167 q15 37 54 63t79 26h320q40 0 79 -26t54 -63l70 -167h309q14 0 23 -9t9 -23z"/></svg>
<div class="t" style="top:224.00px;height:40px;line-height:40px;font-size:19.5px;color:#fff;font-weight:400;left:698.00px;">删除</div>
<div class="b" style="left:763.00px;top:220.00px;width:99.00px;height:48.00px;background:#848aa0;border-radius:5px;"></div>
<svg class="i" style="left:781.00px;top:232.50px;width:18.00px;height:21px;" viewBox="0 -1536 1536 1792"><path fill="#fff" transform="scale(1,-1)" d="M1024 640q0 106 -75 181t-181 75t-181 -75t-75 -181t75 -181t181 -75t181 75t75 181zM1536 749v-222q0 -12 -8 -23t-20 -13l-185 -28q-19 -54 -39 -91q35 -50 107 -138q10 -12 10 -25t-9 -23q-27 -37 -99 -108t-94 -71q-12 0 -26 9l-138 108q-44 -23 -91 -38 q-16 -136 -29 -186q-7 -28 -36 -28h-222q-14 0 -24.5 8.5t-11.5 21.5l-28 184q-49 16 -90 37l-141 -107q-10 -9 -25 -9q-14 0 -25 11q-126 114 -165 168q-7 10 -7 23q0 12 8 23q15 21 51 66.5t54 70.5q-27 50 -41 99l-183 27q-13 2 -21 12.5t-8 23.5v222q0 12 8 23t19 13 l186 28q14 46 39 92q-40 57 -107 138q-10 12 -10 24q0 10 9 23q26 36 98.5 107.5t94.5 71.5q13 0 26 -10l138 -107q44 23 91 38q16 136 29 186q7 28 36 28h222q14 0 24.5 -8.5t11.5 -21.5l28 -184q49 -16 90 -37l142 107q9 9 24 9q13 0 25 -10q129 -119 165 -170q7 -8 7 -22 q0 -12 -8 -23q-15 -21 -51 -66.5t-54 -70.5q26 -50 41 -98l183 -28q13 -2 21 -12.5t8 -23.5z"/></svg>
<div class="t" style="top:224.00px;height:40px;line-height:40px;font-size:19.5px;color:#fff;font-weight:400;left:803.00px;">更多</div>
<div class="b" style="left:1936.00px;top:220.00px;width:280.00px;height:50.00px;background:#fff;border:1.5px solid #d0d7e2;"></div>
<div class="t" style="top:224.50px;height:40px;line-height:40px;font-size:19.5px;color:#aaa;left:1954.50px;">搜索</div>
<div class="b" style="left:2224.00px;top:220.00px;width:204.00px;height:48.00px;background:#f4f4f4;border:1px solid #ddd;border-radius:5px;"></div>
<div class="b" style="left:2280.00px;top:220.00px;width:1.00px;height:48.00px;background:#ddd;"></div>
<div class="b" style="left:2353.00px;top:220.00px;width:1.00px;height:48.00px;background:#ddd;"></div>
<svg class="i" style="left:2244.2px;top:232px;width:18.8px;height:19.8px" viewBox="0 0 18.8 19.8"><path fill="#333" fill-rule="evenodd" d="M0 0h18.8v19.8H0z M1.8 2.9h15.3v14.8H1.8z"/><g fill="#333"><rect x="3.9" y="5.3" width="1.5" height="1.5"/><rect x="6.9" y="5.3" width="8.6" height="1.5"/><rect x="3.9" y="8.3" width="1.5" height="1.6"/><rect x="6.9" y="8.3" width="8.6" height="1.6"/><rect x="3.9" y="11.6" width="1.5" height="1.4"/><rect x="6.9" y="11.6" width="8.6" height="1.4"/><rect x="3.9" y="14.6" width="1.5" height="1.7"/><rect x="6.9" y="14.6" width="8.6" height="1.7"/></g></svg>
<svg class="i" style="left:2298.8px;top:234.1px;width:18.3px;height:17.7px" viewBox="0 0 18.3 17.7"><g fill="#333"><rect x="0" y="0" width="5.1" height="4.5"/><rect x="6.6" y="0" width="5.1" height="4.5"/><rect x="13.2" y="0" width="5.1" height="4.5"/><rect x="0" y="6.3" width="5.1" height="4.5"/><rect x="6.6" y="6.3" width="5.1" height="4.5"/><rect x="13.2" y="6.3" width="5.1" height="4.5"/><rect x="0" y="12.9" width="5.1" height="4.8"/><rect x="6.6" y="12.9" width="5.1" height="4.8"/><rect x="13.2" y="12.9" width="5.1" height="4.8"/></g></svg>
<svg class="i" style="left:2324.1px;top:242.2px;width:11.8px;height:6px" viewBox="0 0 11.8 6"><path fill="#333" d="M0 0h11.8L5.9 6z"/></svg>
<svg class="i" style="left:2371.8px;top:232px;width:18.4px;height:19.8px" viewBox="0 0 18.4 19.8"><path fill="#333" d="M0 15h18.4v4.8H0z M5.5 0h11.4v11.2l-3.9-3.9-1.4 1.4-3.6-3.6 1.4-1.4z M9.46 4.38 L12.42 7.34 L8.99 10.78 L6.02 7.81Z M5.10 8.73 L8.07 11.70 L6.48 13.28 L3.52 10.32Z"/></svg>
<svg class="i" style="left:2397.2px;top:242.2px;width:11.8px;height:6px" viewBox="0 0 11.8 6"><path fill="#333" d="M0 0h11.8L5.9 6z"/></svg>
<div class="b" style="left:2436.00px;top:220.00px;width:57.00px;height:48.00px;background:#f4f4f4;border:1px solid #ddd;border-radius:5px;"></div>
<svg class="i" style="left:2454px;top:232px;width:22px;height:21px" viewBox="0 0 22 21"><circle cx="8.9" cy="8.4" r="6.9" fill="none" stroke="#333" stroke-width="2.5"/><path d="M14 13.6 L19.7 18.8" stroke="#333" stroke-width="3" stroke-linecap="round"/></svg>
<div class="b" style="left:390px;top:285px;width:2103px;height:766.5px;overflow:hidden">
<div class="b" style="left:0.00px;top:61.50px;width:2103.00px;height:70.45px;background:#f9f9f9;"></div>
<div class="b" style="left:0.00px;top:202.40px;width:2103.00px;height:70.45px;background:#f5f5f5;"></div>
<div class="b" style="left:0.00px;top:343.30px;width:2103.00px;height:70.45px;background:#f9f9f9;"></div>
<div class="b" style="left:0.00px;top:484.20px;width:2103.00px;height:70.45px;background:#f9f9f9;"></div>
<div class="b" style="left:0.00px;top:625.10px;width:2103.00px;height:70.45px;background:#f9f9f9;"></div>
<div class="b" style="left:0.00px;top:0.00px;width:2103.00px;height:1.00px;background:#f2f2f2;"></div>
<div class="b" style="left:0.00px;top:60.50px;width:2103.00px;height:1.25px;background:#dcdcdc;"></div>
<div class="b" style="left:0.00px;top:131.45px;width:2103.00px;height:1.00px;background:#f2f2f2;"></div>
<div class="b" style="left:0.00px;top:201.90px;width:2103.00px;height:1.00px;background:#f2f2f2;"></div>
<div class="b" style="left:0.00px;top:272.35px;width:2103.00px;height:1.00px;background:#f2f2f2;"></div>
<div class="b" style="left:0.00px;top:342.80px;width:2103.00px;height:1.00px;background:#f2f2f2;"></div>
<div class="b" style="left:0.00px;top:413.25px;width:2103.00px;height:1.00px;background:#f2f2f2;"></div>
<div class="b" style="left:0.00px;top:483.70px;width:2103.00px;height:1.00px;background:#f2f2f2;"></div>
<div class="b" style="left:0.00px;top:554.15px;width:2103.00px;height:1.00px;background:#f2f2f2;"></div>
<div class="b" style="left:0.00px;top:624.60px;width:2103.00px;height:1.00px;background:#f2f2f2;"></div>
<div class="b" style="left:0.00px;top:695.05px;width:2103.00px;height:1.00px;background:#f2f2f2;"></div>
<div class="b" style="left:0.00px;top:765.50px;width:2103.00px;height:1.00px;background:#f2f2f2;"></div>
<div class="b" style="left:0.00px;top:0.00px;width:1.00px;height:766.50px;background:#f2f2f2;"></div>
<div class="b" style="left:66.00px;top:0.00px;width:1.00px;height:766.50px;background:#f2f2f2;"></div>
<div class="b" style="left:147.00px;top:0.00px;width:1.00px;height:766.50px;background:#f2f2f2;"></div>
<div class="b" style="left:241.00px;top:0.00px;width:1.00px;height:766.50px;background:#f2f2f2;"></div>
<div class="b" style="left:356.00px;top:0.00px;width:1.00px;height:766.50px;background:#f2f2f2;"></div>
<div class="b" style="left:597.00px;top:0.00px;width:1.00px;height:766.50px;background:#f2f2f2;"></div>
<div class="b" style="left:838.00px;top:0.00px;width:1.00px;height:766.50px;background:#f2f2f2;"></div>
<div class="b" style="left:992.00px;top:0.00px;width:1.00px;height:766.50px;background:#f2f2f2;"></div>
<div class="b" style="left:1102.00px;top:0.00px;width:1.00px;height:766.50px;background:#f2f2f2;"></div>
<div class="b" style="left:1283.00px;top:0.00px;width:1.00px;height:766.50px;background:#f2f2f2;"></div>
<div class="b" style="left:1398.00px;top:0.00px;width:1.00px;height:766.50px;background:#f2f2f2;"></div>
<div class="b" style="left:1510.00px;top:0.00px;width:1.00px;height:766.50px;background:#f2f2f2;"></div>
<div class="b" style="left:1702.00px;top:0.00px;width:1.00px;height:766.50px;background:#f2f2f2;"></div>
<div class="b" style="left:1894.00px;top:0.00px;width:1.00px;height:766.50px;background:#f2f2f2;"></div>
<div class="b" style="left:1967.00px;top:0.00px;width:1.00px;height:766.50px;background:#f2f2f2;"></div>
<div class="b" style="left:24.25px;top:19.00px;width:17.50px;height:17.50px;background:#fff;border:1.5px solid #767676;border-radius:3.5px;"></div>
<div class="t" style="top:10.20px;height:40px;line-height:40px;font-size:21px;color:#333;font-weight:700;left:-393.38px;width:1000px;text-align:center;">ID</div>
<div class="t" style="top:11.00px;height:40px;line-height:40px;font-size:21px;color:#333;font-weight:700;left:-305.88px;width:1000px;text-align:center;">用户<span style="position:relative;top:-1.2px">ID</span></div>
<div class="t" style="top:11.00px;height:40px;line-height:40px;font-size:21px;color:#333;font-weight:700;left:-201.25px;width:1000px;text-align:center;">交易币种</div>
<div class="t" style="top:11.00px;height:40px;line-height:40px;font-size:21px;color:#333;font-weight:700;left:-23.12px;width:1000px;text-align:center;">开始时间</div>
<div class="t" style="top:11.00px;height:40px;line-height:40px;font-size:21px;color:#333;font-weight:700;left:217.88px;width:1000px;text-align:center;">结束时间</div>
<div class="t" style="top:11.00px;height:40px;line-height:40px;font-size:21px;color:#333;font-weight:700;left:415.38px;width:1000px;text-align:center;">涨幅百分比<span style="position:relative;top:-1.2px">%</span></div>
<div class="t" style="top:11.00px;height:40px;line-height:40px;font-size:21px;color:#333;font-weight:700;left:547.50px;width:1000px;text-align:center;">倍率</div>
<div class="t" style="top:11.00px;height:40px;line-height:40px;font-size:21px;color:#333;font-weight:700;left:692.88px;width:1000px;text-align:center;">金额</div>
<div class="t" style="top:11.00px;height:40px;line-height:40px;font-size:21px;color:#333;font-weight:700;left:840.75px;width:1000px;text-align:center;">金额单位</div>
<div class="t" style="top:11.00px;height:40px;line-height:40px;font-size:21px;color:#333;font-weight:700;left:954.38px;width:1000px;text-align:center;">状态</div>
<div class="t" style="top:11.00px;height:40px;line-height:40px;font-size:21px;color:#333;font-weight:700;left:1106.45px;width:1000px;text-align:center;">开始价格</div>
<div class="t" style="top:11.00px;height:40px;line-height:40px;font-size:21px;color:#333;font-weight:700;left:1298.40px;width:1000px;text-align:center;">结束价格</div>
<div class="t" style="top:11.00px;height:40px;line-height:40px;font-size:21px;color:#333;font-weight:700;left:1430.85px;width:1000px;text-align:center;">输赢</div>
<div class="b" style="left:24.25px;top:84.48px;width:17.50px;height:17.50px;background:#fff;border:1.5px solid #767676;border-radius:3.5px;"></div>
<div class="t" style="top:76.12px;height:40px;line-height:40px;font-size:21px;color:#333;left:-393.38px;width:1000px;text-align:center;">105</div>
<div class="t" style="top:76.12px;height:40px;line-height:40px;font-size:21px;color:#333;left:-305.88px;width:1000px;text-align:center;">329</div>
<div class="t" style="top:76.12px;height:40px;line-height:40px;font-size:21px;color:#333;left:-201.25px;width:1000px;text-align:center;">BTC</div>
<div class="t" style="top:76.12px;height:40px;line-height:40px;font-size:21px;color:#333;left:-23.12px;width:1000px;text-align:center;">2025-10-17 23:33:58</div>
<div class="t" style="top:76.12px;height:40px;line-height:40px;font-size:21px;color:#333;left:217.88px;width:1000px;text-align:center;">2025-10-17 23:34:58</div>
<div class="t" style="top:76.12px;height:40px;line-height:40px;font-size:21px;color:#333;left:415.38px;width:1000px;text-align:center;">0.2500</div>
<div class="t" style="top:76.12px;height:40px;line-height:40px;font-size:21px;color:#333;left:547.50px;width:1000px;text-align:center;">1.1500</div>
<div class="b" style="left:1132.00px;top:81.00px;width:122.00px;height:30.00px;background:#3367d6;"></div>
<div class="t" style="top:76.12px;height:40px;line-height:40px;font-size:21px;color:#fff;left:692.88px;width:1000px;text-align:center;">1000.000000</div>
<div class="t" style="top:76.12px;height:40px;line-height:40px;font-size:21px;color:#333;left:840.75px;width:1000px;text-align:center;">USDT</div>
<div class="t" style="top:76.12px;height:40px;line-height:40px;font-size:21px;color:#333;left:1106.45px;width:1000px;text-align:center;">105945.000000</div>
<div class="t" style="top:76.12px;height:40px;line-height:40px;font-size:21px;color:#333;left:1298.40px;width:1000px;text-align:center;">105845.800000</div>
<div class="t" style="top:77.12px;height:40px;line-height:40px;font-size:21px;color:#f75444;left:1430.85px;width:1000px;text-align:center;">输</div>
<div class="b" style="left:1421.00px;top:86.53px;width:18.00px;height:18.00px;background:#444c69;border-radius:50%;"></div>
<div class="t" style="top:75.33px;height:40px;line-height:40px;font-size:21px;color:#444c69;left:1444.50px;">平仓</div>
<div class="b" style="left:24.25px;top:154.93px;width:17.50px;height:17.50px;background:#fff;border:1.5px solid #767676;border-radius:3.5px;"></div>
<div class="t" style="top:146.57px;height:40px;line-height:40px;font-size:21px;color:#333;left:-393.38px;width:1000px;text-align:center;">104</div>
<div class="t" style="top:146.57px;height:40px;line-height:40px;font-size:21px;color:#333;left:-305.88px;width:1000px;text-align:center;">329</div>
<div class="t" style="top:146.57px;height:40px;line-height:40px;font-size:21px;color:#333;left:-201.25px;width:1000px;text-align:center;">BTC</div>
<div class="t" style="top:146.57px;height:40px;line-height:40px;font-size:21px;color:#333;left:-23.12px;width:1000px;text-align:center;">2025-10-17 18:50:48</div>
<div class="t" style="top:146.57px;height:40px;line-height:40px;font-size:21px;color:#333;left:217.88px;width:1000px;text-align:center;">2025-10-17 18:51:48</div>
<div class="t" style="top:146.57px;height:40px;line-height:40px;font-size:21px;color:#333;left:415.38px;width:1000px;text-align:center;">0.2500</div>
<div class="t" style="top:146.57px;height:40px;line-height:40px;font-size:21px;color:#333;left:547.50px;width:1000px;text-align:center;">1.1500</div>
<div class="t" style="top:146.57px;height:40px;line-height:40px;font-size:21px;color:#333;left:692.88px;width:1000px;text-align:center;">10000.000000</div>
<div class="t" style="top:146.57px;height:40px;line-height:40px;font-size:21px;color:#333;left:840.75px;width:1000px;text-align:center;">USDT</div>
<div class="t" style="top:146.57px;height:40px;line-height:40px;font-size:21px;color:#333;left:1106.45px;width:1000px;text-align:center;">104627.540000</div>
<div class="t" style="top:146.57px;height:40px;line-height:40px;font-size:21px;color:#333;left:1298.40px;width:1000px;text-align:center;">104660.000000</div>
<div class="t" style="top:147.57px;height:40px;line-height:40px;font-size:21px;color:#f75444;left:1430.85px;width:1000px;text-align:center;">输</div>
<div class="b" style="left:1421.00px;top:156.98px;width:18.00px;height:18.00px;background:#444c69;border-radius:50%;"></div>
<div class="t" style="top:145.78px;height:40px;line-height:40px;font-size:21px;color:#444c69;left:1444.50px;">平仓</div>
<div class="b" style="left:24.25px;top:225.38px;width:17.50px;height:17.50px;background:#fff;border:1.5px solid #767676;border-radius:3.5px;"></div>
<div class="t" style="top:217.02px;height:40px;line-height:40px;font-size:21px;color:#333;left:-393.38px;width:1000px;text-align:center;">103</div>
<div class="t" style="top:217.02px;height:40px;line-height:40px;font-size:21px;color:#333;left:-305.88px;width:1000px;text-align:center;">329</div>
<div class="t" style="top:217.02px;height:40px;line-height:40px;font-size:21px;color:#333;left:-201.25px;width:1000px;text-align:center;">BTC</div>
<div class="t" style="top:217.02px;height:40px;line-height:40px;font-size:21px;color:#333;left:-23.12px;width:1000px;text-align:center;">2025-10-17 18:49:17</div>
<div class="t" style="top:217.02px;height:40px;line-height:40px;font-size:21px;color:#333;left:217.88px;width:1000px;text-align:center;">2025-10-17 18:50:17</div>
<div class="t" style="top:217.02px;height:40px;line-height:40px;font-size:21px;color:#333;left:415.38px;width:1000px;text-align:center;">-0.1500</div>
<div class="t" style="top:217.02px;height:40px;line-height:40px;font-size:21px;color:#333;left:547.50px;width:1000px;text-align:center;">1.1500</div>
<div class="t" style="top:217.02px;height:40px;line-height:40px;font-size:21px;color:#333;left:692.88px;width:1000px;text-align:center;">5000.000000</div>
<div class="t" style="top:217.02px;height:40px;line-height:40px;font-size:21px;color:#333;left:840.75px;width:1000px;text-align:center;">USDT</div>
<div class="t" style="top:217.02px;height:40px;line-height:40px;font-size:21px;color:#333;left:1106.45px;width:1000px;text-align:center;">104534.980000</div>
<div class="t" style="top:217.02px;height:40px;line-height:40px;font-size:21px;color:#333;left:1298.40px;width:1000px;text-align:center;">104656.210000</div>
<div class="t" style="top:218.02px;height:40px;line-height:40px;font-size:21px;color:#f75444;left:1430.85px;width:1000px;text-align:center;">输</div>
<div class="b" style="left:1421.00px;top:227.42px;width:18.00px;height:18.00px;background:#444c69;border-radius:50%;"></div>
<div class="t" style="top:216.23px;height:40px;line-height:40px;font-size:21px;color:#444c69;left:1444.50px;">平仓</div>
<div class="b" style="left:24.25px;top:295.83px;width:17.50px;height:17.50px;background:#fff;border:1.5px solid #767676;border-radius:3.5px;"></div>
<div class="t" style="top:287.48px;height:40px;line-height:40px;font-size:21px;color:#333;left:-393.38px;width:1000px;text-align:center;">102</div>
<div class="t" style="top:287.48px;height:40px;line-height:40px;font-size:21px;color:#333;left:-305.88px;width:1000px;text-align:center;">329</div>
<div class="t" style="top:287.48px;height:40px;line-height:40px;font-size:21px;color:#333;left:-201.25px;width:1000px;text-align:center;">BTC</div>
<div class="t" style="top:287.48px;height:40px;line-height:40px;font-size:21px;color:#333;left:-23.12px;width:1000px;text-align:center;">2025-10-17 18:45:19</div>
<div class="t" style="top:287.48px;height:40px;line-height:40px;font-size:21px;color:#333;left:217.88px;width:1000px;text-align:center;">2025-10-17 18:46:19</div>
<div class="t" style="top:287.48px;height:40px;line-height:40px;font-size:21px;color:#333;left:415.38px;width:1000px;text-align:center;">-0.1500</div>
<div class="t" style="top:287.48px;height:40px;line-height:40px;font-size:21px;color:#333;left:547.50px;width:1000px;text-align:center;">1.1500</div>
<div class="t" style="top:287.48px;height:40px;line-height:40px;font-size:21px;color:#333;left:692.88px;width:1000px;text-align:center;">2000.000000</div>
<div class="t" style="top:287.48px;height:40px;line-height:40px;font-size:21px;color:#333;left:840.75px;width:1000px;text-align:center;">USDT</div>
<div class="t" style="top:287.48px;height:40px;line-height:40px;font-size:21px;color:#333;left:1106.45px;width:1000px;text-align:center;">104415.000000</div>
<div class="t" style="top:287.48px;height:40px;line-height:40px;font-size:21px;color:#333;left:1298.40px;width:1000px;text-align:center;">104466.690000</div>
<div class="t" style="top:288.48px;height:40px;line-height:40px;font-size:21px;color:#f75444;left:1430.85px;width:1000px;text-align:center;">输</div>
<div class="b" style="left:1421.00px;top:297.88px;width:18.00px;height:18.00px;background:#444c69;border-radius:50%;"></div>
<div class="t" style="top:286.68px;height:40px;line-height:40px;font-size:21px;color:#444c69;left:1444.50px;">平仓</div>
<div class="b" style="left:24.25px;top:366.27px;width:17.50px;height:17.50px;background:#fff;border:1.5px solid #767676;border-radius:3.5px;"></div>
<div class="t" style="top:357.92px;height:40px;line-height:40px;font-size:21px;color:#333;left:-393.38px;width:1000px;text-align:center;">101</div>
<div class="t" style="top:357.92px;height:40px;line-height:40px;font-size:21px;color:#333;left:-305.88px;width:1000px;text-align:center;">329</div>
<div class="t" style="top:357.92px;height:40px;line-height:40px;font-size:21px;color:#333;left:-201.25px;width:1000px;text-align:center;">BTC</div>
<div class="t" style="top:357.92px;height:40px;line-height:40px;font-size:21px;color:#333;left:-23.12px;width:1000px;text-align:center;">2025-10-17 18:42:32</div>
<div class="t" style="top:357.92px;height:40px;line-height:40px;font-size:21px;color:#333;left:217.88px;width:1000px;text-align:center;">2025-10-17 18:43:32</div>
<div class="t" style="top:357.92px;height:40px;line-height:40px;font-size:21px;color:#333;left:415.38px;width:1000px;text-align:center;">-0.1500</div>
<div class="t" style="top:357.92px;height:40px;line-height:40px;font-size:21px;color:#333;left:547.50px;width:1000px;text-align:center;">1.1500</div>
<div class="t" style="top:357.92px;height:40px;line-height:40px;font-size:21px;color:#333;left:692.88px;width:1000px;text-align:center;">1000.000000</div>
<div class="t" style="top:357.92px;height:40px;line-height:40px;font-size:21px;color:#333;left:840.75px;width:1000px;text-align:center;">USDT</div>
<div class="t" style="top:357.92px;height:40px;line-height:40px;font-size:21px;color:#333;left:1106.45px;width:1000px;text-align:center;">104258.970000</div>
<div class="t" style="top:357.92px;height:40px;line-height:40px;font-size:21px;color:#333;left:1298.40px;width:1000px;text-align:center;">104359.350000</div>
<div class="t" style="top:358.92px;height:40px;line-height:40px;font-size:21px;color:#f75444;left:1430.85px;width:1000px;text-align:center;">输</div>
<div class="b" style="left:1421.00px;top:368.32px;width:18.00px;height:18.00px;background:#444c69;border-radius:50%;"></div>
<div class="t" style="top:357.12px;height:40px;line-height:40px;font-size:21px;color:#444c69;left:1444.50px;">平仓</div>
<div class="b" style="left:24.25px;top:436.73px;width:17.50px;height:17.50px;background:#fff;border:1.5px solid #767676;border-radius:3.5px;"></div>
<div class="t" style="top:428.38px;height:40px;line-height:40px;font-size:21px;color:#333;left:-393.38px;width:1000px;text-align:center;">100</div>
<div class="t" style="top:428.38px;height:40px;line-height:40px;font-size:21px;color:#333;left:-305.88px;width:1000px;text-align:center;">329</div>
<div class="t" style="top:428.38px;height:40px;line-height:40px;font-size:21px;color:#333;left:-201.25px;width:1000px;text-align:center;">BTC</div>
<div class="t" style="top:428.38px;height:40px;line-height:40px;font-size:21px;color:#333;left:-23.12px;width:1000px;text-align:center;">2025-10-17 18:40:22</div>
<div class="t" style="top:428.38px;height:40px;line-height:40px;font-size:21px;color:#333;left:217.88px;width:1000px;text-align:center;">2025-10-17 18:41:22</div>
<div class="t" style="top:428.38px;height:40px;line-height:40px;font-size:21px;color:#333;left:415.38px;width:1000px;text-align:center;">0.2500</div>
<div class="t" style="top:428.38px;height:40px;line-height:40px;font-size:21px;color:#333;left:547.50px;width:1000px;text-align:center;">1.1500</div>
<div class="t" style="top:428.38px;height:40px;line-height:40px;font-size:21px;color:#333;left:692.88px;width:1000px;text-align:center;">1000.000000</div>
<div class="t" style="top:428.38px;height:40px;line-height:40px;font-size:21px;color:#333;left:840.75px;width:1000px;text-align:center;">USDT</div>
<div class="t" style="top:428.38px;height:40px;line-height:40px;font-size:21px;color:#333;left:1106.45px;width:1000px;text-align:center;">104320.000000</div>
<div class="t" style="top:428.38px;height:40px;line-height:40px;font-size:21px;color:#333;left:1298.40px;width:1000px;text-align:center;">104169.150000</div>
<div class="t" style="top:429.38px;height:40px;line-height:40px;font-size:21px;color:#f75444;left:1430.85px;width:1000px;text-align:center;">输</div>
<div class="b" style="left:1421.00px;top:438.77px;width:18.00px;height:18.00px;background:#444c69;border-radius:50%;"></div>
<div class="t" style="top:427.58px;height:40px;line-height:40px;font-size:21px;color:#444c69;left:1444.50px;">平仓</div>
<div class="b" style="left:24.25px;top:507.18px;width:17.50px;height:17.50px;background:#fff;border:1.5px solid #767676;border-radius:3.5px;"></div>
<div class="t" style="top:498.83px;height:40px;line-height:40px;font-size:21px;color:#333;left:-393.38px;width:1000px;text-align:center;">99</div>
<div class="t" style="top:498.83px;height:40px;line-height:40px;font-size:21px;color:#333;left:-305.88px;width:1000px;text-align:center;">329</div>
<div class="t" style="top:498.83px;height:40px;line-height:40px;font-size:21px;color:#333;left:-201.25px;width:1000px;text-align:center;">BTC</div>
<div class="t" style="top:498.83px;height:40px;line-height:40px;font-size:21px;color:#333;left:-23.12px;width:1000px;text-align:center;">2025-10-17 02:58:24</div>
<div class="t" style="top:498.83px;height:40px;line-height:40px;font-size:21px;color:#333;left:217.88px;width:1000px;text-align:center;">2025-10-17 02:59:24</div>
<div class="t" style="top:498.83px;height:40px;line-height:40px;font-size:21px;color:#333;left:415.38px;width:1000px;text-align:center;">0.2500</div>
<div class="t" style="top:498.83px;height:40px;line-height:40px;font-size:21px;color:#333;left:547.50px;width:1000px;text-align:center;">1.1500</div>
<div class="t" style="top:498.83px;height:40px;line-height:40px;font-size:21px;color:#333;left:692.88px;width:1000px;text-align:center;">1000.000000</div>
<div class="t" style="top:498.83px;height:40px;line-height:40px;font-size:21px;color:#333;left:840.75px;width:1000px;text-align:center;">USDT</div>
<div class="t" style="top:498.83px;height:40px;line-height:40px;font-size:21px;color:#333;left:1106.45px;width:1000px;text-align:center;">108537.490000</div>
<div class="t" style="top:498.83px;height:40px;line-height:40px;font-size:21px;color:#333;left:1298.40px;width:1000px;text-align:center;">108605.000000</div>
<div class="t" style="top:499.83px;height:40px;line-height:40px;font-size:21px;color:#f75444;left:1430.85px;width:1000px;text-align:center;">输</div>
<div class="b" style="left:1421.00px;top:509.23px;width:18.00px;height:18.00px;background:#444c69;border-radius:50%;"></div>
<div class="t" style="top:498.03px;height:40px;line-height:40px;font-size:21px;color:#444c69;left:1444.50px;">平仓</div>
<div class="b" style="left:24.25px;top:577.63px;width:17.50px;height:17.50px;background:#fff;border:1.5px solid #767676;border-radius:3.5px;"></div>
<div class="t" style="top:569.28px;height:40px;line-height:40px;font-size:21px;color:#333;left:-393.38px;width:1000px;text-align:center;">98</div>
<div class="t" style="top:569.28px;height:40px;line-height:40px;font-size:21px;color:#333;left:-305.88px;width:1000px;text-align:center;">311</div>
<div class="t" style="top:569.28px;height:40px;line-height:40px;font-size:21px;color:#333;left:-201.25px;width:1000px;text-align:center;">ETH</div>
<div class="t" style="top:569.28px;height:40px;line-height:40px;font-size:21px;color:#333;left:-23.12px;width:1000px;text-align:center;">2023-09-16 14:57:12</div>
<div class="t" style="top:569.28px;height:40px;line-height:40px;font-size:21px;color:#333;left:217.88px;width:1000px;text-align:center;">2023-09-16 14:58:12</div>
<div class="t" style="top:569.28px;height:40px;line-height:40px;font-size:21px;color:#333;left:415.38px;width:1000px;text-align:center;">0.2500</div>
<div class="t" style="top:569.28px;height:40px;line-height:40px;font-size:21px;color:#333;left:547.50px;width:1000px;text-align:center;">1.2500</div>
<div class="t" style="top:569.28px;height:40px;line-height:40px;font-size:21px;color:#333;left:692.88px;width:1000px;text-align:center;">15000.000000</div>
<div class="t" style="top:569.28px;height:40px;line-height:40px;font-size:21px;color:#333;left:840.75px;width:1000px;text-align:center;">USDT</div>
<div class="t" style="top:569.28px;height:40px;line-height:40px;font-size:21px;color:#333;left:1106.45px;width:1000px;text-align:center;">1635.270000</div>
<div class="t" style="top:569.28px;height:40px;line-height:40px;font-size:21px;color:#333;left:1298.40px;width:1000px;text-align:center;">1639.374500</div>
<div class="t" style="top:570.28px;height:40px;line-height:40px;font-size:21px;color:#18bc9c;left:1430.85px;width:1000px;text-align:center;">赢</div>
<div class="b" style="left:1421.00px;top:579.68px;width:18.00px;height:18.00px;background:#444c69;border-radius:50%;"></div>
<div class="t" style="top:568.48px;height:40px;line-height:40px;font-size:21px;color:#444c69;left:1444.50px;">平仓</div>
<div class="b" style="left:24.25px;top:648.08px;width:17.50px;height:17.50px;background:#fff;border:1.5px solid #767676;border-radius:3.5px;"></div>
<div class="t" style="top:639.73px;height:40px;line-height:40px;font-size:21px;color:#333;left:-393.38px;width:1000px;text-align:center;">97</div>
<div class="t" style="top:639.73px;height:40px;line-height:40px;font-size:21px;color:#333;left:-305.88px;width:1000px;text-align:center;">311</div>
<div class="t" style="top:639.73px;height:40px;line-height:40px;font-size:21px;color:#333;left:-201.25px;width:1000px;text-align:center;">ETH</div>
<div class="t" style="top:639.73px;height:40px;line-height:40px;font-size:21px;color:#333;left:-23.12px;width:1000px;text-align:center;">2023-09-16 14:49:16</div>
<div class="t" style="top:639.73px;height:40px;line-height:40px;font-size:21px;color:#333;left:217.88px;width:1000px;text-align:center;">2023-09-16 14:50:16</div>
<div class="t" style="top:639.73px;height:40px;line-height:40px;font-size:21px;color:#333;left:415.38px;width:1000px;text-align:center;">0.2500</div>
<div class="t" style="top:639.73px;height:40px;line-height:40px;font-size:21px;color:#333;left:547.50px;width:1000px;text-align:center;">1.2500</div>
<div class="t" style="top:639.73px;height:40px;line-height:40px;font-size:21px;color:#333;left:692.88px;width:1000px;text-align:center;">15000.000000</div>
<div class="t" style="top:639.73px;height:40px;line-height:40px;font-size:21px;color:#333;left:840.75px;width:1000px;text-align:center;">USDT</div>
<div class="t" style="top:639.73px;height:40px;line-height:40px;font-size:21px;color:#333;left:1106.45px;width:1000px;text-align:center;">1636.520000</div>
<div class="t" style="top:639.73px;height:40px;line-height:40px;font-size:21px;color:#333;left:1298.40px;width:1000px;text-align:center;">1640.635900</div>
<div class="t" style="top:640.73px;height:40px;line-height:40px;font-size:21px;color:#18bc9c;left:1430.85px;width:1000px;text-align:center;">赢</div>
<div class="b" style="left:1421.00px;top:650.12px;width:18.00px;height:18.00px;background:#444c69;border-radius:50%;"></div>
<div class="t" style="top:638.93px;height:40px;line-height:40px;font-size:21px;color:#444c69;left:1444.50px;">平仓</div>
<div class="b" style="left:24.25px;top:718.53px;width:17.50px;height:17.50px;background:#fff;border:1.5px solid #767676;border-radius:3.5px;"></div>
<div class="t" style="top:710.18px;height:40px;line-height:40px;font-size:21px;color:#333;left:-393.38px;width:1000px;text-align:center;">96</div>
<div class="t" style="top:710.18px;height:40px;line-height:40px;font-size:21px;color:#333;left:-305.88px;width:1000px;text-align:center;">311</div>
<div class="t" style="top:710.18px;height:40px;line-height:40px;font-size:21px;color:#333;left:-201.25px;width:1000px;text-align:center;">ETH</div>
<div class="t" style="top:710.18px;height:40px;line-height:40px;font-size:21px;color:#333;left:-23.12px;width:1000px;text-align:center;">2023-09-16 14:46:13</div>
<div class="t" style="top:710.18px;height:40px;line-height:40px;font-size:21px;color:#333;left:217.88px;width:1000px;text-align:center;">2023-09-16 14:47:13</div>
<div class="t" style="top:710.18px;height:40px;line-height:40px;font-size:21px;color:#333;left:415.38px;width:1000px;text-align:center;">0.2500</div>
<div class="t" style="top:710.18px;height:40px;line-height:40px;font-size:21px;color:#333;left:547.50px;width:1000px;text-align:center;">1.2500</div>
<div class="t" style="top:710.18px;height:40px;line-height:40px;font-size:21px;color:#333;left:692.88px;width:1000px;text-align:center;">10000.000000</div>
<div class="t" style="top:710.18px;height:40px;line-height:40px;font-size:21px;color:#333;left:840.75px;width:1000px;text-align:center;">USDT</div>
<div class="t" style="top:710.18px;height:40px;line-height:40px;font-size:21px;color:#333;left:1106.45px;width:1000px;text-align:center;">1637.010000</div>
<div class="t" style="top:710.18px;height:40px;line-height:40px;font-size:21px;color:#333;left:1298.40px;width:1000px;text-align:center;">1641.123000</div>
<div class="t" style="top:711.18px;height:40px;line-height:40px;font-size:21px;color:#18bc9c;left:1430.85px;width:1000px;text-align:center;">赢</div>
<div class="b" style="left:1421.00px;top:720.58px;width:18.00px;height:18.00px;background:#444c69;border-radius:50%;"></div>
<div class="t" style="top:709.38px;height:40px;line-height:40px;font-size:21px;color:#444c69;left:1444.50px;">平仓</div>
</div>
<div class="b" style="left:390.00px;top:1052.00px;width:2103.00px;height:22.50px;background:#fafafa;"></div>
<svg class="i" style="left:390px;top:1052px;width:2103px;height:22px" viewBox="0 0 2103 22"><path fill="#8b8b8b" d="M6.5 11.5 L15 4 L15 19Z M2096.5 11.5 L2088 4 L2088 19Z"/><rect x="27" y="5" width="1811" height="13" rx="6.5" fill="#8b8b8b"/></svg>
<div class="b" style="left:2377px;top:285px;width:116px;height:768.5px;background:#fff;box-shadow:-2px 0 10px rgba(0,0,0,.09), 2px 0 8px rgba(0,0,0,.04);overflow:hidden">
<div class="b" style="left:0.00px;top:61.50px;width:116.00px;height:70.45px;background:#f9f9f9;"></div>
<div class="b" style="left:0.00px;top:202.40px;width:116.00px;height:70.45px;background:#f5f5f5;"></div>
<div class="b" style="left:0.00px;top:343.30px;width:116.00px;height:70.45px;background:#f9f9f9;"></div>
<div class="b" style="left:0.00px;top:484.20px;width:116.00px;height:70.45px;background:#f9f9f9;"></div>
<div class="b" style="left:0.00px;top:625.10px;width:116.00px;height:70.45px;background:#f9f9f9;"></div>
<div class="b" style="left:0.00px;top:0.00px;width:116.00px;height:1.00px;background:#f2f2f2;"></div>
<div class="b" style="left:0.00px;top:60.50px;width:116.00px;height:1.25px;background:#dcdcdc;"></div>
<div class="b" style="left:0.00px;top:131.45px;width:116.00px;height:1.00px;background:#f2f2f2;"></div>
<div class="b" style="left:0.00px;top:201.90px;width:116.00px;height:1.00px;background:#f2f2f2;"></div>
<div class="b" style="left:0.00px;top:272.35px;width:116.00px;height:1.00px;background:#f2f2f2;"></div>
<div class="b" style="left:0.00px;top:342.80px;width:116.00px;height:1.00px;background:#f2f2f2;"></div>
<div class="b" style="left:0.00px;top:413.25px;width:116.00px;height:1.00px;background:#f2f2f2;"></div>
<div class="b" style="left:0.00px;top:483.70px;width:116.00px;height:1.00px;background:#f2f2f2;"></div>
<div class="b" style="left:0.00px;top:554.15px;width:116.00px;height:1.00px;background:#f2f2f2;"></div>
<div class="b" style="left:0.00px;top:624.60px;width:116.00px;height:1.00px;background:#f2f2f2;"></div>
<div class="b" style="left:0.00px;top:695.05px;width:116.00px;height:1.00px;background:#f2f2f2;"></div>
<div class="b" style="left:0.00px;top:765.50px;width:116.00px;height:1.00px;background:#f2f2f2;"></div>
<div class="b" style="left:0.00px;top:0.00px;width:1.00px;height:768.50px;background:#f2f2f2;"></div>
<div class="b" style="left:115.00px;top:0.00px;width:1.00px;height:768.50px;background:#f2f2f2;"></div>
<div class="t" style="top:11.00px;height:40px;line-height:40px;font-size:21px;color:#333;font-weight:700;left:-442.00px;width:1000px;text-align:center;">操作</div>
<div class="b" style="left:23.00px;top:80.73px;width:33.00px;height:32.00px;background:#18bc9c;border-radius:4px;"></div>
<div class="b" style="left:62.00px;top:80.73px;width:31.00px;height:32.00px;background:#f75444;border-radius:4px;"></div>
<svg class="i" style="left:31.00px;top:86.48px;width:16.71px;height:19.5px;" viewBox="0 -1536 1536 1792"><path fill="#fff" transform="scale(1,-1)" d="M363 0l91 91l-235 235l-91 -91v-107h128v-128h107zM886 928q0 22 -22 22q-10 0 -17 -7l-542 -542q-7 -7 -7 -17q0 -22 22 -22q10 0 17 7l542 542q7 7 7 17zM832 1120l416 -416l-832 -832h-416v416zM1515 1024q0 -53 -37 -90l-166 -166l-416 416l166 165q36 38 90 38 q53 0 91 -38l235 -234q37 -39 37 -91z"/></svg>
<svg class="i" style="left:69.80px;top:86.48px;width:15.32px;height:19.5px;" viewBox="0 -1536 1408 1792"><path fill="#fff" transform="scale(1,-1)" d="M512 160v704q0 14 -9 23t-23 9h-64q-14 0 -23 -9t-9 -23v-704q0 -14 9 -23t23 -9h64q14 0 23 9t9 23zM768 160v704q0 14 -9 23t-23 9h-64q-14 0 -23 -9t-9 -23v-704q0 -14 9 -23t23 -9h64q14 0 23 9t9 23zM1024 160v704q0 14 -9 23t-23 9h-64q-14 0 -23 -9t-9 -23v-704 q0 -14 9 -23t23 -9h64q14 0 23 9t9 23zM480 1152h448l-48 117q-7 9 -17 11h-317q-10 -2 -17 -11zM1408 1120v-64q0 -14 -9 -23t-23 -9h-96v-948q0 -83 -47 -143.5t-113 -60.5h-832q-66 0 -113 58.5t-47 141.5v952h-96q-14 0 -23 9t-9 23v64q0 14 9 23t23 9h309l70 167 q15 37 54 63t79 26h320q40 0 79 -26t54 -63l70 -167h309q14 0 23 -9t9 -23z"/></svg>
<div class="b" style="left:23.00px;top:151.18px;width:33.00px;height:32.00px;background:#18bc9c;border-radius:4px;"></div>
<div class="b" style="left:62.00px;top:151.18px;width:31.00px;height:32.00px;background:#f75444;border-radius:4px;"></div>
<svg class="i" style="left:31.00px;top:156.93px;width:16.71px;height:19.5px;" viewBox="0 -1536 1536 1792"><path fill="#fff" transform="scale(1,-1)" d="M363 0l91 91l-235 235l-91 -91v-107h128v-128h107zM886 928q0 22 -22 22q-10 0 -17 -7l-542 -542q-7 -7 -7 -17q0 -22 22 -22q10 0 17 7l542 542q7 7 7 17zM832 1120l416 -416l-832 -832h-416v416zM1515 1024q0 -53 -37 -90l-166 -166l-416 416l166 165q36 38 90 38 q53 0 91 -38l235 -234q37 -39 37 -91z"/></svg>
<svg class="i" style="left:69.80px;top:156.93px;width:15.32px;height:19.5px;" viewBox="0 -1536 1408 1792"><path fill="#fff" transform="scale(1,-1)" d="M512 160v704q0 14 -9 23t-23 9h-64q-14 0 -23 -9t-9 -23v-704q0 -14 9 -23t23 -9h64q14 0 23 9t9 23zM768 160v704q0 14 -9 23t-23 9h-64q-14 0 -23 -9t-9 -23v-704q0 -14 9 -23t23 -9h64q14 0 23 9t9 23zM1024 160v704q0 14 -9 23t-23 9h-64q-14 0 -23 -9t-9 -23v-704 q0 -14 9 -23t23 -9h64q14 0 23 9t9 23zM480 1152h448l-48 117q-7 9 -17 11h-317q-10 -2 -17 -11zM1408 1120v-64q0 -14 -9 -23t-23 -9h-96v-948q0 -83 -47 -143.5t-113 -60.5h-832q-66 0 -113 58.5t-47 141.5v952h-96q-14 0 -23 9t-9 23v64q0 14 9 23t23 9h309l70 167 q15 37 54 63t79 26h320q40 0 79 -26t54 -63l70 -167h309q14 0 23 -9t9 -23z"/></svg>
<div class="b" style="left:23.00px;top:221.62px;width:33.00px;height:32.00px;background:#18bc9c;border-radius:4px;"></div>
<div class="b" style="left:62.00px;top:221.62px;width:31.00px;height:32.00px;background:#f75444;border-radius:4px;"></div>
<svg class="i" style="left:31.00px;top:227.38px;width:16.71px;height:19.5px;" viewBox="0 -1536 1536 1792"><path fill="#fff" transform="scale(1,-1)" d="M363 0l91 91l-235 235l-91 -91v-107h128v-128h107zM886 928q0 22 -22 22q-10 0 -17 -7l-542 -542q-7 -7 -7 -17q0 -22 22 -22q10 0 17 7l542 542q7 7 7 17zM832 1120l416 -416l-832 -832h-416v416zM1515 1024q0 -53 -37 -90l-166 -166l-416 416l166 165q36 38 90 38 q53 0 91 -38l235 -234q37 -39 37 -91z"/></svg>
<svg class="i" style="left:69.80px;top:227.38px;width:15.32px;height:19.5px;" viewBox="0 -1536 1408 1792"><path fill="#fff" transform="scale(1,-1)" d="M512 160v704q0 14 -9 23t-23 9h-64q-14 0 -23 -9t-9 -23v-704q0 -14 9 -23t23 -9h64q14 0 23 9t9 23zM768 160v704q0 14 -9 23t-23 9h-64q-14 0 -23 -9t-9 -23v-704q0 -14 9 -23t23 -9h64q14 0 23 9t9 23zM1024 160v704q0 14 -9 23t-23 9h-64q-14 0 -23 -9t-9 -23v-704 q0 -14 9 -23t23 -9h64q14 0 23 9t9 23zM480 1152h448l-48 117q-7 9 -17 11h-317q-10 -2 -17 -11zM1408 1120v-64q0 -14 -9 -23t-23 -9h-96v-948q0 -83 -47 -143.5t-113 -60.5h-832q-66 0 -113 58.5t-47 141.5v952h-96q-14 0 -23 9t-9 23v64q0 14 9 23t23 9h309l70 167 q15 37 54 63t79 26h320q40 0 79 -26t54 -63l70 -167h309q14 0 23 -9t9 -23z"/></svg>
<div class="b" style="left:23.00px;top:292.08px;width:33.00px;height:32.00px;background:#18bc9c;border-radius:4px;"></div>
<div class="b" style="left:62.00px;top:292.08px;width:31.00px;height:32.00px;background:#f75444;border-radius:4px;"></div>
<svg class="i" style="left:31.00px;top:297.83px;width:16.71px;height:19.5px;" viewBox="0 -1536 1536 1792"><path fill="#fff" transform="scale(1,-1)" d="M363 0l91 91l-235 235l-91 -91v-107h128v-128h107zM886 928q0 22 -22 22q-10 0 -17 -7l-542 -542q-7 -7 -7 -17q0 -22 22 -22q10 0 17 7l542 542q7 7 7 17zM832 1120l416 -416l-832 -832h-416v416zM1515 1024q0 -53 -37 -90l-166 -166l-416 416l166 165q36 38 90 38 q53 0 91 -38l235 -234q37 -39 37 -91z"/></svg>
<svg class="i" style="left:69.80px;top:297.83px;width:15.32px;height:19.5px;" viewBox="0 -1536 1408 1792"><path fill="#fff" transform="scale(1,-1)" d="M512 160v704q0 14 -9 23t-23 9h-64q-14 0 -23 -9t-9 -23v-704q0 -14 9 -23t23 -9h64q14 0 23 9t9 23zM768 160v704q0 14 -9 23t-23 9h-64q-14 0 -23 -9t-9 -23v-704q0 -14 9 -23t23 -9h64q14 0 23 9t9 23zM1024 160v704q0 14 -9 23t-23 9h-64q-14 0 -23 -9t-9 -23v-704 q0 -14 9 -23t23 -9h64q14 0 23 9t9 23zM480 1152h448l-48 117q-7 9 -17 11h-317q-10 -2 -17 -11zM1408 1120v-64q0 -14 -9 -23t-23 -9h-96v-948q0 -83 -47 -143.5t-113 -60.5h-832q-66 0 -113 58.5t-47 141.5v952h-96q-14 0 -23 9t-9 23v64q0 14 9 23t23 9h309l70 167 q15 37 54 63t79 26h320q40 0 79 -26t54 -63l70 -167h309q14 0 23 -9t9 -23z"/></svg>
<div class="b" style="left:23.00px;top:362.52px;width:33.00px;height:32.00px;background:#18bc9c;border-radius:4px;"></div>
<div class="b" style="left:62.00px;top:362.52px;width:31.00px;height:32.00px;background:#f75444;border-radius:4px;"></div>
<svg class="i" style="left:31.00px;top:368.27px;width:16.71px;height:19.5px;" viewBox="0 -1536 1536 1792"><path fill="#fff" transform="scale(1,-1)" d="M363 0l91 91l-235 235l-91 -91v-107h128v-128h107zM886 928q0 22 -22 22q-10 0 -17 -7l-542 -542q-7 -7 -7 -17q0 -22 22 -22q10 0 17 7l542 542q7 7 7 17zM832 1120l416 -416l-832 -832h-416v416zM1515 1024q0 -53 -37 -90l-166 -166l-416 416l166 165q36 38 90 38 q53 0 91 -38l235 -234q37 -39 37 -91z"/></svg>
<svg class="i" style="left:69.80px;top:368.27px;width:15.32px;height:19.5px;" viewBox="0 -1536 1408 1792"><path fill="#fff" transform="scale(1,-1)" d="M512 160v704q0 14 -9 23t-23 9h-64q-14 0 -23 -9t-9 -23v-704q0 -14 9 -23t23 -9h64q14 0 23 9t9 23zM768 160v704q0 14 -9 23t-23 9h-64q-14 0 -23 -9t-9 -23v-704q0 -14 9 -23t23 -9h64q14 0 23 9t9 23zM1024 160v704q0 14 -9 23t-23 9h-64q-14 0 -23 -9t-9 -23v-704 q0 -14 9 -23t23 -9h64q14 0 23 9t9 23zM480 1152h448l-48 117q-7 9 -17 11h-317q-10 -2 -17 -11zM1408 1120v-64q0 -14 -9 -23t-23 -9h-96v-948q0 -83 -47 -143.5t-113 -60.5h-832q-66 0 -113 58.5t-47 141.5v952h-96q-14 0 -23 9t-9 23v64q0 14 9 23t23 9h309l70 167 q15 37 54 63t79 26h320q40 0 79 -26t54 -63l70 -167h309q14 0 23 -9t9 -23z"/></svg>
<div class="b" style="left:23.00px;top:432.98px;width:33.00px;height:32.00px;background:#18bc9c;border-radius:4px;"></div>
<div class="b" style="left:62.00px;top:432.98px;width:31.00px;height:32.00px;background:#f75444;border-radius:4px;"></div>
<svg class="i" style="left:31.00px;top:438.73px;width:16.71px;height:19.5px;" viewBox="0 -1536 1536 1792"><path fill="#fff" transform="scale(1,-1)" d="M363 0l91 91l-235 235l-91 -91v-107h128v-128h107zM886 928q0 22 -22 22q-10 0 -17 -7l-542 -542q-7 -7 -7 -17q0 -22 22 -22q10 0 17 7l542 542q7 7 7 17zM832 1120l416 -416l-832 -832h-416v416zM1515 1024q0 -53 -37 -90l-166 -166l-416 416l166 165q36 38 90 38 q53 0 91 -38l235 -234q37 -39 37 -91z"/></svg>
<svg class="i" style="left:69.80px;top:438.73px;width:15.32px;height:19.5px;" viewBox="0 -1536 1408 1792"><path fill="#fff" transform="scale(1,-1)" d="M512 160v704q0 14 -9 23t-23 9h-64q-14 0 -23 -9t-9 -23v-704q0 -14 9 -23t23 -9h64q14 0 23 9t9 23zM768 160v704q0 14 -9 23t-23 9h-64q-14 0 -23 -9t-9 -23v-704q0 -14 9 -23t23 -9h64q14 0 23 9t9 23zM1024 160v704q0 14 -9 23t-23 9h-64q-14 0 -23 -9t-9 -23v-704 q0 -14 9 -23t23 -9h64q14 0 23 9t9 23zM480 1152h448l-48 117q-7 9 -17 11h-317q-10 -2 -17 -11zM1408 1120v-64q0 -14 -9 -23t-23 -9h-96v-948q0 -83 -47 -143.5t-113 -60.5h-832q-66 0 -113 58.5t-47 141.5v952h-96q-14 0 -23 9t-9 23v64q0 14 9 23t23 9h309l70 167 q15 37 54 63t79 26h320q40 0 79 -26t54 -63l70 -167h309q14 0 23 -9t9 -23z"/></svg>
<div class="b" style="left:23.00px;top:503.43px;width:33.00px;height:32.00px;background:#18bc9c;border-radius:4px;"></div>
<div class="b" style="left:62.00px;top:503.43px;width:31.00px;height:32.00px;background:#f75444;border-radius:4px;"></div>
<svg class="i" style="left:31.00px;top:509.18px;width:16.71px;height:19.5px;" viewBox="0 -1536 1536 1792"><path fill="#fff" transform="scale(1,-1)" d="M363 0l91 91l-235 235l-91 -91v-107h128v-128h107zM886 928q0 22 -22 22q-10 0 -17 -7l-542 -542q-7 -7 -7 -17q0 -22 22 -22q10 0 17 7l542 542q7 7 7 17zM832 1120l416 -416l-832 -832h-416v416zM1515 1024q0 -53 -37 -90l-166 -166l-416 416l166 165q36 38 90 38 q53 0 91 -38l235 -234q37 -39 37 -91z"/></svg>
<svg class="i" style="left:69.80px;top:509.18px;width:15.32px;height:19.5px;" viewBox="0 -1536 1408 1792"><path fill="#fff" transform="scale(1,-1)" d="M512 160v704q0 14 -9 23t-23 9h-64q-14 0 -23 -9t-9 -23v-704q0 -14 9 -23t23 -9h64q14 0 23 9t9 23zM768 160v704q0 14 -9 23t-23 9h-64q-14 0 -23 -9t-9 -23v-704q0 -14 9 -23t23 -9h64q14 0 23 9t9 23zM1024 160v704q0 14 -9 23t-23 9h-64q-14 0 -23 -9t-9 -23v-704 q0 -14 9 -23t23 -9h64q14 0 23 9t9 23zM480 1152h448l-48 117q-7 9 -17 11h-317q-10 -2 -17 -11zM1408 1120v-64q0 -14 -9 -23t-23 -9h-96v-948q0 -83 -47 -143.5t-113 -60.5h-832q-66 0 -113 58.5t-47 141.5v952h-96q-14 0 -23 9t-9 23v64q0 14 9 23t23 9h309l70 167 q15 37 54 63t79 26h320q40 0 79 -26t54 -63l70 -167h309q14 0 23 -9t9 -23z"/></svg>
<div class="b" style="left:23.00px;top:573.88px;width:33.00px;height:32.00px;background:#18bc9c;border-radius:4px;"></div>
<div class="b" style="left:62.00px;top:573.88px;width:31.00px;height:32.00px;background:#f75444;border-radius:4px;"></div>
<svg class="i" style="left:31.00px;top:579.63px;width:16.71px;height:19.5px;" viewBox="0 -1536 1536 1792"><path fill="#fff" transform="scale(1,-1)" d="M363 0l91 91l-235 235l-91 -91v-107h128v-128h107zM886 928q0 22 -22 22q-10 0 -17 -7l-542 -542q-7 -7 -7 -17q0 -22 22 -22q10 0 17 7l542 542q7 7 7 17zM832 1120l416 -416l-832 -832h-416v416zM1515 1024q0 -53 -37 -90l-166 -166l-416 416l166 165q36 38 90 38 q53 0 91 -38l235 -234q37 -39 37 -91z"/></svg>
<svg class="i" style="left:69.80px;top:579.63px;width:15.32px;height:19.5px;" viewBox="0 -1536 1408 1792"><path fill="#fff" transform="scale(1,-1)" d="M512 160v704q0 14 -9 23t-23 9h-64q-14 0 -23 -9t-9 -23v-704q0 -14 9 -23t23 -9h64q14 0 23 9t9 23zM768 160v704q0 14 -9 23t-23 9h-64q-14 0 -23 -9t-9 -23v-704q0 -14 9 -23t23 -9h64q14 0 23 9t9 23zM1024 160v704q0 14 -9 23t-23 9h-64q-14 0 -23 -9t-9 -23v-704 q0 -14 9 -23t23 -9h64q14 0 23 9t9 23zM480 1152h448l-48 117q-7 9 -17 11h-317q-10 -2 -17 -11zM1408 1120v-64q0 -14 -9 -23t-23 -9h-96v-948q0 -83 -47 -143.5t-113 -60.5h-832q-66 0 -113 58.5t-47 141.5v952h-96q-14 0 -23 9t-9 23v64q0 14 9 23t23 9h309l70 167 q15 37 54 63t79 26h320q40 0 79 -26t54 -63l70 -167h309q14 0 23 -9t9 -23z"/></svg>
<div class="b" style="left:23.00px;top:644.33px;width:33.00px;height:32.00px;background:#18bc9c;border-radius:4px;"></div>
<div class="b" style="left:62.00px;top:644.33px;width:31.00px;height:32.00px;background:#f75444;border-radius:4px;"></div>
<svg class="i" style="left:31.00px;top:650.08px;width:16.71px;height:19.5px;" viewBox="0 -1536 1536 1792"><path fill="#fff" transform="scale(1,-1)" d="M363 0l91 91l-235 235l-91 -91v-107h128v-128h107zM886 928q0 22 -22 22q-10 0 -17 -7l-542 -542q-7 -7 -7 -17q0 -22 22 -22q10 0 17 7l542 542q7 7 7 17zM832 1120l416 -416l-832 -832h-416v416zM1515 1024q0 -53 -37 -90l-166 -166l-416 416l166 165q36 38 90 38 q53 0 91 -38l235 -234q37 -39 37 -91z"/></svg>
<svg class="i" style="left:69.80px;top:650.08px;width:15.32px;height:19.5px;" viewBox="0 -1536 1408 1792"><path fill="#fff" transform="scale(1,-1)" d="M512 160v704q0 14 -9 23t-23 9h-64q-14 0 -23 -9t-9 -23v-704q0 -14 9 -23t23 -9h64q14 0 23 9t9 23zM768 160v704q0 14 -9 23t-23 9h-64q-14 0 -23 -9t-9 -23v-704q0 -14 9 -23t23 -9h64q14 0 23 9t9 23zM1024 160v704q0 14 -9 23t-23 9h-64q-14 0 -23 -9t-9 -23v-704 q0 -14 9 -23t23 -9h64q14 0 23 9t9 23zM480 1152h448l-48 117q-7 9 -17 11h-317q-10 -2 -17 -11zM1408 1120v-64q0 -14 -9 -23t-23 -9h-96v-948q0 -83 -47 -143.5t-113 -60.5h-832q-66 0 -113 58.5t-47 141.5v952h-96q-14 0 -23 9t-9 23v64q0 14 9 23t23 9h309l70 167 q15 37 54 63t79 26h320q40 0 79 -26t54 -63l70 -167h309q14 0 23 -9t9 -23z"/></svg>
<div class="b" style="left:23.00px;top:714.78px;width:33.00px;height:32.00px;background:#18bc9c;border-radius:4px;"></div>
<div class="b" style="left:62.00px;top:714.78px;width:31.00px;height:32.00px;background:#f75444;border-radius:4px;"></div>
<svg class="i" style="left:31.00px;top:720.53px;width:16.71px;height:19.5px;" viewBox="0 -1536 1536 1792"><path fill="#fff" transform="scale(1,-1)" d="M363 0l91 91l-235 235l-91 -91v-107h128v-128h107zM886 928q0 22 -22 22q-10 0 -17 -7l-542 -542q-7 -7 -7 -17q0 -22 22 -22q10 0 17 7l542 542q7 7 7 17zM832 1120l416 -416l-832 -832h-416v416zM1515 1024q0 -53 -37 -90l-166 -166l-416 416l166 165q36 38 90 38 q53 0 91 -38l235 -234q37 -39 37 -91z"/></svg>
<svg class="i" style="left:69.80px;top:720.53px;width:15.32px;height:19.5px;" viewBox="0 -1536 1408 1792"><path fill="#fff" transform="scale(1,-1)" d="M512 160v704q0 14 -9 23t-23 9h-64q-14 0 -23 -9t-9 -23v-704q0 -14 9 -23t23 -9h64q14 0 23 9t9 23zM768 160v704q0 14 -9 23t-23 9h-64q-14 0 -23 -9t-9 -23v-704q0 -14 9 -23t23 -9h64q14 0 23 9t9 23zM1024 160v704q0 14 -9 23t-23 9h-64q-14 0 -23 -9t-9 -23v-704 q0 -14 9 -23t23 -9h64q14 0 23 9t9 23zM480 1152h448l-48 117q-7 9 -17 11h-317q-10 -2 -17 -11zM1408 1120v-64q0 -14 -9 -23t-23 -9h-96v-948q0 -83 -47 -143.5t-113 -60.5h-832q-66 0 -113 58.5t-47 141.5v952h-96q-14 0 -23 9t-9 23v64q0 14 9 23t23 9h309l70 167 q15 37 54 63t79 26h320q40 0 79 -26t54 -63l70 -167h309q14 0 23 -9t9 -23z"/></svg>
</div>
<div class="t" style="top:1095.50px;height:40px;line-height:40px;font-size:21px;color:#333;left:390.00px;">显示第 1 到第 10 条记录，总共 62 条记录 每页显示</div>
<div class="b" style="left:875.00px;top:1093.00px;width:77.00px;height:47.60px;background:#f4f4f4;border:1px solid #ddd;border-radius:5px;"></div>
<div class="t" style="top:1096.00px;height:40px;line-height:40px;font-size:19.5px;color:#333;left:895.00px;">10</div>
<svg class="i" style="left:920.50px;top:1107.75px;width:11.14px;height:19.5px;" viewBox="0 -1536 1024 1792"><path fill="#333" transform="scale(1,-1)" d="M1024 320q0 -26 -19 -45t-45 -19h-896q-26 0 -45 19t-19 45t19 45l448 448q19 19 45 19t45 -19l448 -448q19 -19 19 -45z"/></svg>
<div class="t" style="top:1095.50px;height:40px;line-height:40px;font-size:21px;color:#333;left:958.00px;">条记录</div>
<div class="b" style="left:1788.40px;top:1090.00px;width:537.40px;height:49.50px;background:#fafafa;border:1px solid #ddd;border-radius:5px 0 0 5px;"></div>
<div class="t" style="top:1095.00px;height:40px;line-height:40px;font-size:21px;color:#666;left:1338.30px;width:1000px;text-align:center;">上一页</div>
<div class="b" style="left:1888.20px;top:1089.70px;width:48.70px;height:50.20px;background:#444c69;"></div>
<div class="t" style="top:1095.00px;height:40px;line-height:40px;font-size:21px;color:#fff;left:1412.55px;width:1000px;text-align:center;">1</div>
<div class="b" style="left:1936.40px;top:1090.00px;width:1.00px;height:49.50px;background:#ddd;"></div>
<div class="t" style="top:1095.00px;height:40px;line-height:40px;font-size:21px;color:#666;left:1460.65px;width:1000px;text-align:center;">2</div>
<div class="b" style="left:1983.90px;top:1090.00px;width:1.00px;height:49.50px;background:#ddd;"></div>
<div class="t" style="top:1095.00px;height:40px;line-height:40px;font-size:21px;color:#666;left:1508.45px;width:1000px;text-align:center;">3</div>
<div class="b" style="left:2032.00px;top:1090.00px;width:1.00px;height:49.50px;background:#ddd;"></div>
<div class="t" style="top:1095.00px;height:40px;line-height:40px;font-size:21px;color:#666;left:1556.55px;width:1000px;text-align:center;">4</div>
<div class="b" style="left:2080.10px;top:1090.00px;width:1.00px;height:49.50px;background:#ddd;"></div>
<div class="t" style="top:1095.00px;height:40px;line-height:40px;font-size:21px;color:#666;left:1605.10px;width:1000px;text-align:center;">5</div>
<div class="b" style="left:2129.10px;top:1090.00px;width:1.00px;height:49.50px;background:#ddd;"></div>
<div class="t" style="top:1095.00px;height:40px;line-height:40px;font-size:21px;color:#666;left:1653.65px;width:1000px;text-align:center;">6</div>
<div class="b" style="left:2177.20px;top:1090.00px;width:1.00px;height:49.50px;background:#ddd;"></div>
<div class="t" style="top:1095.00px;height:40px;line-height:40px;font-size:21px;color:#666;left:1701.75px;width:1000px;text-align:center;">7</div>
<div class="b" style="left:2225.30px;top:1090.00px;width:1.00px;height:49.50px;background:#ddd;"></div>
<div class="t" style="top:1095.00px;height:40px;line-height:40px;font-size:21px;color:#666;left:1775.80px;width:1000px;text-align:center;">下一页</div>
<div class="b" style="left:2334.00px;top:1090.00px;width:75.00px;height:49.00px;background:#fff;border:1.5px solid #d0d7e2;"></div>
<div class="b" style="left:2416.00px;top:1091.00px;width:77.00px;height:47.50px;background:#f4f4f4;border:1px solid #ddd;border-radius:5px;"></div>
<div class="t" style="top:1095.00px;height:40px;line-height:40px;font-size:19.5px;color:#333;left:1954.75px;width:1000px;text-align:center;">跳转</div>
</body></html>
